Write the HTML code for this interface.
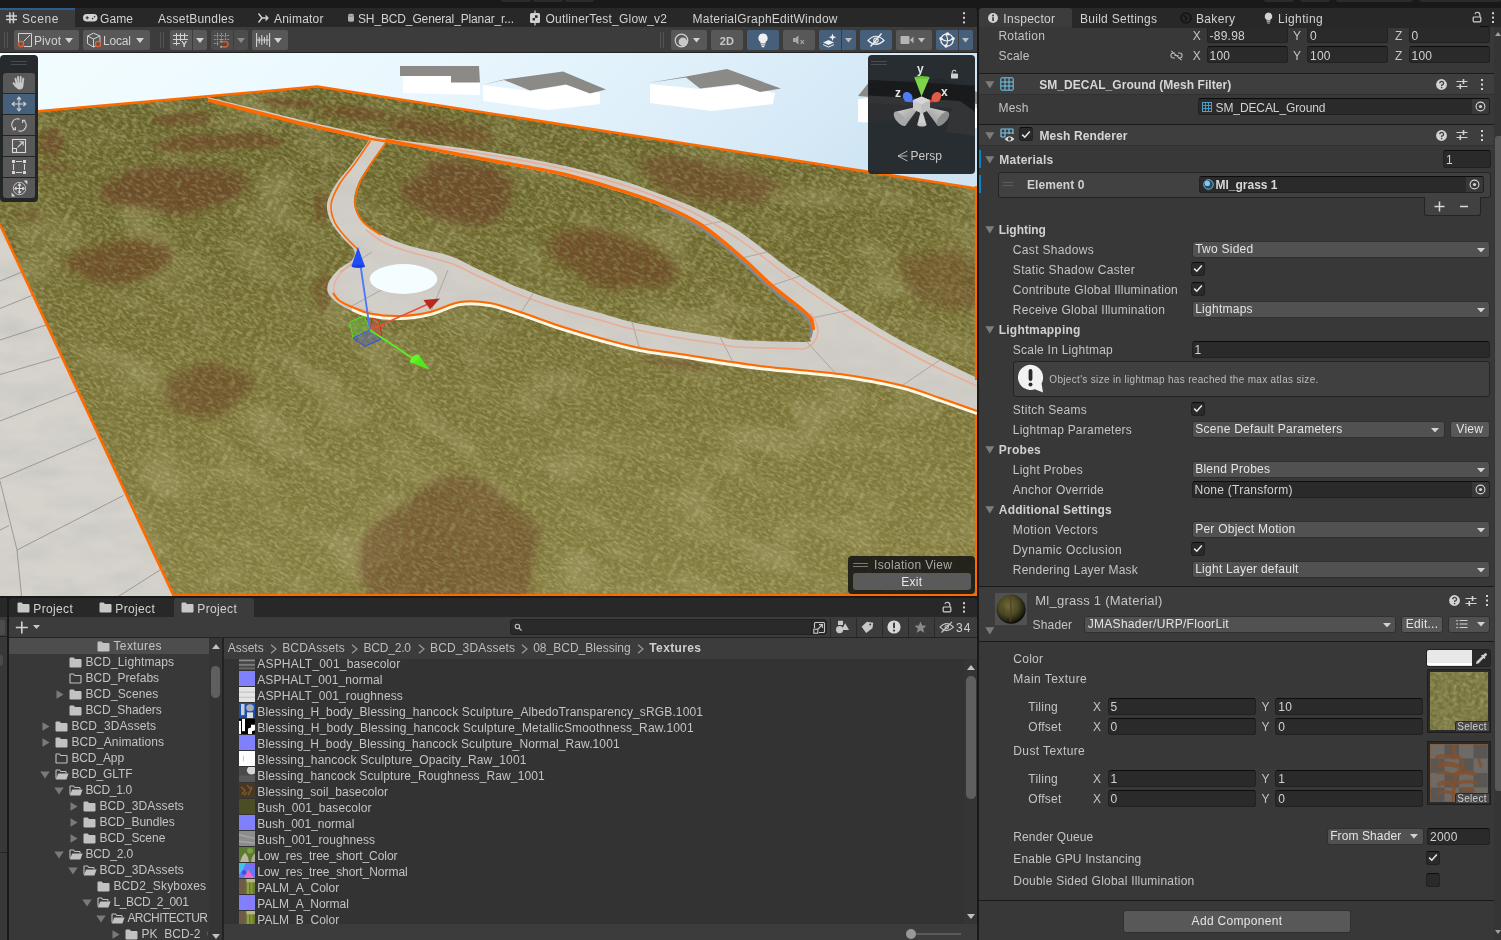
<!DOCTYPE html>
<html><head><meta charset="utf-8"><title>Unity Editor</title>
<style>
html,body{margin:0;padding:0;}
body{width:1501px;height:940px;overflow:hidden;background:#191919;position:relative;font-family:"Liberation Sans",sans-serif;font-size:12px;}
body div,body svg{position:absolute;box-sizing:border-box;}
.t{overflow:visible;}
</style></head><body>
<div id="root" style="left:0;top:0;width:1501px;height:940px;will-change:transform;">
<div style="left:501px;top:0px;width:30px;height:2px;background:#2b2b2b;border-radius:0 0 2px 2px;"></div>
<div style="left:533px;top:0px;width:30px;height:2px;background:#2b2b2b;border-radius:0 0 2px 2px;"></div>
<div style="left:565px;top:0px;width:29px;height:2px;background:#2b2b2b;border-radius:0 0 2px 2px;"></div>
<div style="left:1264px;top:0px;width:30px;height:2px;background:#2b2b2b;border-radius:0 0 2px 2px;"></div>
<div style="left:1300px;top:0px;width:30px;height:2px;background:#2b2b2b;border-radius:0 0 2px 2px;"></div>
<div style="left:1336px;top:0px;width:77px;height:2px;background:#2b2b2b;border-radius:0 0 2px 2px;"></div>
<div style="left:1419px;top:0px;width:82px;height:2px;background:#2b2b2b;border-radius:0 0 2px 2px;"></div>
<div style="left:0px;top:8px;width:977px;height:19px;background:#282828;border-radius:0 3px 0 0;"></div>
<div style="left:0px;top:8px;width:75px;height:20px;background:#3c3c3c;"></div>
<div style="left:0px;top:8px;width:75px;height:2px;background:#2c5d8c;"></div>
<svg style="left:6px;top:12px;" width="11" height="11.5" viewBox="0 0 11 11.5" ><path d="M3.9 0.3v11M7.4 0.3v11M0 4.1h11M0 7.6h11" stroke="#d2d2d2" stroke-width="1.5" fill="none"/></svg>
<div class="t" style="left:22px;top:10.6px;line-height:16px;font-size:12px;color:#d2d2d2;letter-spacing:0.617px;white-space:nowrap;">Scene</div>
<svg style="left:83px;top:13px;" width="15" height="10" viewBox="0 0 15 10" ><rect x="0" y="1" width="14.5" height="7.6" rx="3.8" fill="#d2d2d2"/><path d="M2.6 4.8h3.2M4.2 3.2v3.2" stroke="#282828" stroke-width="1"/><circle cx="9.6" cy="5.6" r="0.8" fill="#282828"/><circle cx="11.6" cy="3.8" r="0.8" fill="#282828"/></svg>
<div class="t" style="left:100px;top:10.6px;line-height:16px;font-size:12px;color:#d2d2d2;letter-spacing:0.104px;white-space:nowrap;">Game</div>
<div class="t" style="left:158px;top:10.6px;line-height:16px;font-size:12px;color:#d2d2d2;letter-spacing:0.237px;white-space:nowrap;">AssetBundles</div>
<svg style="left:257px;top:12px;" width="13" height="12" viewBox="0 0 13 12" ><path d="M1.5 1.5 L5 6 L1.5 10.5 M5 6 H11 M8.5 3.5 L11 6 L8.5 8.5" stroke="#d2d2d2" stroke-width="1.4" fill="none" stroke-linejoin="round"/></svg>
<div class="t" style="left:274px;top:10.6px;line-height:16px;font-size:12px;color:#d2d2d2;letter-spacing:0.21px;white-space:nowrap;">Animator</div>
<svg style="left:347px;top:13px;" width="8" height="10" viewBox="0 0 8 10" ><path d="M1 2.2 Q1 0.8 4 0.8 Q7 0.8 7 2.2 V7.2 Q7 8.8 4 8.8 Q1 8.8 1 7.2Z" fill="#b0b0b0"/><path d="M1 2.6 Q4 4.2 7 2.6" stroke="#707070" stroke-width="0.7" fill="none"/></svg>
<div class="t" style="left:358px;top:10.6px;line-height:16px;font-size:12px;color:#d2d2d2;letter-spacing:-0.137px;white-space:nowrap;">SH_BCD_General_Planar_r...</div>
<svg style="left:529px;top:10px;" width="12" height="16" viewBox="0 0 12 16" ><rect x="1" y="3" width="10" height="10" rx="1.5" fill="#d2d2d2"/><path d="M6 0.5v3M6 13v2.5" stroke="#d2d2d2" stroke-width="1.2"/><rect x="6" y="5.3" width="2.6" height="2.6" fill="#282828"/><rect x="3.6" y="8" width="2.4" height="2.4" fill="#282828"/></svg>
<div class="t" style="left:545.5px;top:10.6px;line-height:16px;font-size:12px;color:#d2d2d2;letter-spacing:0.216px;white-space:nowrap;">OutlinerTest_Glow_v2</div>
<div class="t" style="left:692.5px;top:10.6px;line-height:16px;font-size:12px;color:#d2d2d2;letter-spacing:0.255px;white-space:nowrap;">MaterialGraphEditWindow</div>
<svg style="left:961px;top:11px;" width="6" height="14" viewBox="0 0 6 14" ><rect x="2" y="1.2" width="2" height="2" fill="#d2d2d2"/><rect x="2" y="5.8" width="2" height="2" fill="#d2d2d2"/><rect x="2" y="10.4" width="2" height="2" fill="#d2d2d2"/></svg>
<div style="left:0px;top:27px;width:977px;height:25px;background:#3c3c3c;"></div>
<div style="left:0px;top:52px;width:977px;height:1px;background:#232323;"></div>
<div style="left:4px;top:32px;width:1px;height:16px;background:#555555;"></div>
<div style="left:7px;top:32px;width:1px;height:16px;background:#555555;"></div>
<div style="left:14px;top:30px;width:65px;height:20px;background:#585858;border-radius:2px;"></div>
<svg style="left:17px;top:32px;" width="17" height="17" viewBox="0 0 17 17" ><path d="M1.5 11V1.5H14.5V14.5H7" stroke="#d2d2d2" stroke-width="1" fill="none"/><path d="M6.5 9.5L13 3" stroke="#d2d2d2" stroke-width="1"/><circle cx="4" cy="12" r="2.6" stroke="#f0602a" stroke-width="1.2" fill="none"/></svg>
<div class="t" style="left:34px;top:32.6px;line-height:16px;font-size:12px;color:#d2d2d2;letter-spacing:0.078px;white-space:nowrap;">Pivot</div>
<svg style="left:65px;top:38.0px;" width="8" height="5" viewBox="0 0 8 5" ><path d="M0 0H8L4.0 5Z" fill="#d2d2d2"/></svg>
<div style="left:83px;top:30px;width:67px;height:20px;background:#585858;border-radius:2px;"></div>
<svg style="left:86px;top:32px;" width="17" height="17" viewBox="0 0 17 17" ><path d="M7.5 1.2L14 4V11.5L7.5 15L1.5 11.5V4Z M1.5 4L7.5 7L14 4 M7.5 7V15" stroke="#d2d2d2" stroke-width="1" fill="none" stroke-linejoin="round"/><circle cx="12" cy="12" r="2.6" stroke="#f0602a" stroke-width="1.2" fill="#585858"/></svg>
<div class="t" style="left:103px;top:32.6px;line-height:16px;font-size:12px;color:#d2d2d2;letter-spacing:-0.172px;white-space:nowrap;">Local</div>
<svg style="left:136px;top:38.0px;" width="8" height="5" viewBox="0 0 8 5" ><path d="M0 0H8L4.0 5Z" fill="#d2d2d2"/></svg>
<div style="left:160px;top:32px;width:1px;height:16px;background:#555555;"></div>
<div style="left:163px;top:32px;width:1px;height:16px;background:#555555;"></div>
<div style="left:170px;top:30px;width:22px;height:20px;background:#585858;border-radius:2px 0 0 2px;"></div>
<div style="left:193px;top:30px;width:14px;height:20px;background:#585858;border-radius:0 2px 2px 0;"></div>
<svg style="left:173px;top:33px;" width="16" height="15" viewBox="0 0 16 15" ><path d="M3.5 0V12.5M7.5 0V8M11.5 0V6.5M0 2.5H15M0 6.5H15M0 10.5H7" stroke="#d2d2d2" stroke-width="1" fill="none"/></svg>
<div class="t" style="left:181px;top:36.2px;line-height:16px;font-size:9.5px;color:#d8d8d8;letter-spacing:0px;white-space:nowrap;font-weight:700;">Y</div>
<svg style="left:196px;top:38.0px;" width="8" height="5" viewBox="0 0 8 5" ><path d="M0 0H8L4.0 5Z" fill="#d2d2d2"/></svg>
<div style="left:211px;top:30px;width:22px;height:20px;background:#4c4c4c;border-radius:2px 0 0 2px;"></div>
<div style="left:234px;top:30px;width:14px;height:20px;background:#4c4c4c;border-radius:0 2px 2px 0;"></div>
<svg style="left:214px;top:33px;" width="16" height="15" viewBox="0 0 16 15" ><path d="M3.5 0V12.5M7.5 0V7M11.5 0V6M0 2.5H15M0 6.5H15M0 10.5H5" stroke="#9a9a9a" stroke-width="1" stroke-dasharray="1.6 1.1" fill="none"/><path d="M8.2 8.6H11.4A2.6 2.6 0 0 1 11.4 13.8H8.2" stroke="#cc5a2e" stroke-width="1.7" fill="none"/><rect x="6.2" y="7.7" width="2" height="1.9" fill="#a8a8a8"/><rect x="6.2" y="12.8" width="2" height="1.9" fill="#a8a8a8"/></svg>
<svg style="left:237px;top:38.0px;" width="8" height="5" viewBox="0 0 8 5" ><path d="M0 0H8L4.0 5Z" fill="#8a8a8a"/></svg>
<div style="left:252px;top:30px;width:36px;height:20px;background:#585858;border-radius:2px;"></div>
<svg style="left:256px;top:33px;" width="15" height="14" viewBox="0 0 15 14" ><path d="M0.6 0V14M13.6 0V14M3.2 4V10.5M5.8 2V12M8.4 4V10.5M11 2V12M0.6 7H13.6" stroke="#d2d2d2" stroke-width="1.1" fill="none"/></svg>
<svg style="left:274px;top:38.0px;" width="8" height="5" viewBox="0 0 8 5" ><path d="M0 0H8L4.0 5Z" fill="#d2d2d2"/></svg>
<div style="left:660px;top:32px;width:1px;height:16px;background:#555555;"></div>
<div style="left:663px;top:32px;width:1px;height:16px;background:#555555;"></div>
<div style="left:671px;top:30px;width:36px;height:20px;background:#585858;border-radius:2px;"></div>
<svg style="left:674px;top:33px;" width="15" height="15" viewBox="0 0 15 15" ><circle cx="7.5" cy="7.5" r="6.3" stroke="#d2d2d2" stroke-width="1.2" fill="none"/><circle cx="8.9" cy="8.7" r="4.3" fill="#c8c8c8"/></svg>
<svg style="left:693px;top:38.25px;" width="7" height="4.5" viewBox="0 0 7 4.5" ><path d="M0 0H7L3.5 4.5Z" fill="#d2d2d2"/></svg>
<div style="left:711px;top:30px;width:32px;height:20px;background:#585858;border-radius:2px;"></div>
<div class="t" style="left:711px;top:33.1px;line-height:16px;font-size:11px;color:#d2d2d2;letter-spacing:0.25px;white-space:nowrap;width:32px;text-align:center;font-weight:700;color:#c8c8c8;">2D</div>
<div style="left:747px;top:30px;width:32px;height:20px;background:#46607c;border-radius:2px;"></div>
<svg style="left:757px;top:33px;" width="12" height="15" viewBox="0 0 12 15" ><path d="M6 0.6A4.6 4.6 0 0 1 8.6 9V10.4H3.4V9A4.6 4.6 0 0 1 6 0.6Z" fill="#f0f0f0"/><rect x="3.8" y="11.2" width="4.4" height="1.4" rx="0.7" fill="#f0f0f0"/><rect x="4.6" y="13.1" width="2.8" height="1.1" rx="0.5" fill="#f0f0f0"/></svg>
<div style="left:783px;top:30px;width:32px;height:20px;background:#585858;border-radius:2px;"></div>
<svg style="left:792px;top:34px;" width="16" height="13" viewBox="0 0 16 13" ><path d="M1 4H3.5L6.5 1.5V10.5L3.5 8H1Z" fill="#a8a8a8"/><path d="M8.5 6L12 9.8M12 6L8.5 9.8" stroke="#a8a8a8" stroke-width="1.1"/></svg>
<div style="left:819px;top:30px;width:22px;height:20px;background:#46607c;border-radius:2px 0 0 2px;"></div>
<div style="left:842px;top:30px;width:14px;height:20px;background:#46607c;border-radius:0 2px 2px 0;"></div>
<svg style="left:822px;top:33px;" width="16" height="15" viewBox="0 0 16 15" ><path d="M1 9.5L6.5 7L12 9.5L6.5 12Z" fill="#f0f0f0"/><path d="M1 11.6L6.5 14L12 11.6" stroke="#f0f0f0" stroke-width="1" fill="none"/><path d="M10.5 0.5L11.5 3.2L14.2 4.2L11.5 5.2L10.5 7.9L9.5 5.2L6.8 4.2L9.5 3.2Z" fill="#f0f0f0"/></svg>
<svg style="left:845px;top:38.25px;" width="7" height="4.5" viewBox="0 0 7 4.5" ><path d="M0 0H7L3.5 4.5Z" fill="#c0c0c0"/></svg>
<div style="left:860px;top:30px;width:32px;height:20px;background:#46607c;border-radius:2px;"></div>
<svg style="left:867px;top:33px;" width="18" height="14" viewBox="0 0 18 14" ><path d="M1 7.5Q9 -1 17 7.5Q9 15 1 7.5Z" stroke="#f0f0f0" stroke-width="1.2" fill="none"/><circle cx="9" cy="7.2" r="2.2" fill="none" stroke="#f0f0f0" stroke-width="1.1"/><path d="M3.5 13.5L14.5 0.5" stroke="#f0f0f0" stroke-width="1.3"/></svg>
<div style="left:896px;top:30px;width:36px;height:20px;background:#585858;border-radius:2px;"></div>
<svg style="left:900px;top:35px;" width="15" height="10" viewBox="0 0 15 10" ><rect x="0.5" y="1" width="9" height="8" rx="1" fill="#b4b4b4"/><path d="M10 5L13.5 1.5V8.5Z" fill="#b4b4b4"/></svg>
<svg style="left:918px;top:38.25px;" width="7" height="4.5" viewBox="0 0 7 4.5" ><path d="M0 0H7L3.5 4.5Z" fill="#c0c0c0"/></svg>
<div style="left:936px;top:30px;width:22px;height:20px;background:#46607c;border-radius:2px 0 0 2px;"></div>
<div style="left:959px;top:30px;width:14px;height:20px;background:#46607c;border-radius:0 2px 2px 0;"></div>
<svg style="left:939px;top:32px;" width="16" height="16" viewBox="0 0 16 16" ><circle cx="8" cy="8" r="6.2" stroke="#f0f0f0" stroke-width="1.3" fill="none"/><path d="M2 6.5Q8 11.5 14 6.5M6.5 2Q10.5 8 7 14" stroke="#f0f0f0" stroke-width="1.1" fill="none"/><circle cx="8.6" cy="1.9" r="1.7" fill="#f0f0f0"/><circle cx="1.9" cy="6.6" r="1.7" fill="#f0f0f0"/><circle cx="14.1" cy="6.6" r="1.7" fill="#f0f0f0"/><circle cx="7" cy="14" r="1.7" fill="#f0f0f0"/></svg>
<svg style="left:962px;top:38.25px;" width="7" height="4.5" viewBox="0 0 7 4.5" ><path d="M0 0H7L3.5 4.5Z" fill="#c0c0c0"/></svg>
<svg style="left:0px;top:53px;" width="977" height="543" viewBox="0 53 977 543" ><defs>
<linearGradient id="sky" x1="0" y1="0" x2="1" y2="0.25"><stop offset="0" stop-color="#f3fdff"/><stop offset="0.4" stop-color="#eaf8fe"/><stop offset="0.7" stop-color="#deeffa"/><stop offset="1" stop-color="#cee4f3"/></linearGradient>
<linearGradient id="grs" x1="0" y1="86" x2="0" y2="596" gradientUnits="userSpaceOnUse"><stop offset="0" stop-color="#65602a"/><stop offset="0.3" stop-color="#6d672e"/><stop offset="0.6" stop-color="#797136"/><stop offset="1" stop-color="#857c40"/></linearGradient>
<filter id="b6" x="-10%" y="-10%" width="120%" height="120%"><feGaussianBlur stdDeviation="4.5"/></filter>
<filter id="b2" x="-10%" y="-10%" width="120%" height="120%"><feGaussianBlur stdDeviation="2.2"/></filter><filter id="b1"><feGaussianBlur stdDeviation="0.6"/></filter>
<filter id="gnoise" x="0" y="0" width="100%" height="100%"><feTurbulence type="fractalNoise" baseFrequency="0.2 0.42" numOctaves="3" seed="3" result="n"/><feColorMatrix in="n" type="matrix" values="0 0 0 0 0.69  0 0 0 0 0.64  0 0 0 0 0.37  2.6 2.6 0 0 -2.4"/></filter>
<filter id="gnoise2" x="0" y="0" width="100%" height="100%"><feTurbulence type="fractalNoise" baseFrequency="0.18 0.4" numOctaves="3" seed="11" result="n"/><feColorMatrix in="n" type="matrix" values="0 0 0 0 0.3  0 0 0 0 0.32  0 0 0 0 0.1  2.6 0 2.6 0 -2.4"/></filter>
<filter id="gmot" x="0" y="0" width="100%" height="100%"><feTurbulence type="fractalNoise" baseFrequency="0.014 0.03" numOctaves="2" seed="21" result="n"/><feColorMatrix in="n" type="matrix" values="0 0 0 0 0.6  0 0 0 0 0.57  0 0 0 0 0.32  2.6 0 2.6 0 -2.5"/></filter>
<filter id="cnoise" x="0" y="0" width="100%" height="100%"><feTurbulence type="fractalNoise" baseFrequency="0.02 0.05" numOctaves="3" seed="5"/><feColorMatrix type="matrix" values="0 0 0 0 0.5  0 0 0 0 0.5  0 0 0 0 0.48  1.2 1.2 0 0 -1.0"/></filter>
<clipPath id="cg"><polygon points="0,114.4 38,111 317,86.5 977,188.5 977,596 173.5,596 0,225"/></clipPath>
<clipPath id="cc"><path d="M206 96.6C221.7 100.5 272.7 113.4 300 119.8C327.3 126.2 355.7 132.1 370 135.2C384.3 138.3 367.7 136.0 386 138.6C404.3 141.2 451.0 146.2 480 150.6C509.0 155.0 536.7 160.1 560 165C583.3 169.9 603.3 175.2 620 180C636.7 184.8 646.7 189.0 660 194C673.3 199.0 686.7 203.7 700 210C713.3 216.3 726.7 223.3 740 232C753.3 240.7 770.0 254.7 780 262C790.0 269.3 788.3 268.0 800 276C811.7 284.0 833.3 299.3 850 310C866.7 320.7 885.0 331.7 900 340C915.0 348.3 927.2 353.7 940 360C952.8 366.3 970.8 375.0 977 378 L977 413C970.8 410.8 952.8 404.3 940 400C927.2 395.7 916.7 391.0 900 387C883.3 383.0 863.3 379.2 840 376C816.7 372.8 786.7 371.3 760 368C733.3 364.7 700.0 359.0 680 356C660.0 353.0 653.3 352.7 640 350C626.7 347.3 613.3 343.7 600 340C586.7 336.3 573.3 332.3 560 328C546.7 323.7 531.7 317.8 520 314C508.3 310.2 500.0 306.7 490 305C480.0 303.3 470.0 302.5 460 304C450.0 305.5 440.0 311.7 430 314C420.0 316.3 410.0 317.7 400 318C390.0 318.3 379.0 317.7 370 316C361.0 314.3 352.7 311.3 346 308C339.3 304.7 333.0 300.0 330 296C327.0 292.0 326.7 288.3 328 284C329.3 279.7 334.0 274.0 338 270C342.0 266.0 349.3 263.3 352 260C354.7 256.7 355.7 253.8 354 250C352.3 246.2 345.8 241.7 342 237C338.2 232.3 333.5 227.5 331 222C328.5 216.5 326.2 210.3 327 204C327.8 197.7 331.8 190.7 336 184C340.2 177.3 346.5 171.2 352 164C357.5 156.8 366.2 144.4 369 140.5 L300 124.5 L211 101.5 Z M386 142 L480 160C493.3 162.5 536.7 169.7 560 175C583.3 180.3 603.3 186.8 620 192C636.7 197.2 646.7 200.3 660 206C673.3 211.7 686.7 217.3 700 226C713.3 234.7 728.3 248.0 740 258C751.7 268.0 760.0 277.3 770 286C780.0 294.7 793.3 304.3 800 310C806.7 315.7 807.9 316.7 810 320C812.1 323.3 812.5 327.0 812.5 330C812.5 333.0 811.4 336.0 810 338C808.6 340.0 815.7 341.7 804 342C792.3 342.3 754.0 340.8 740 340C726.0 339.2 730.0 338.5 720 337C710.0 335.5 694.7 333.5 680 331C665.3 328.5 645.3 325.0 632 322C618.7 319.0 612.0 316.3 600 313C588.0 309.7 573.3 306.2 560 302C546.7 297.8 533.3 293.3 520 288C506.7 282.7 491.7 275.3 480 270C468.3 264.7 461.7 260.0 450 256C438.3 252.0 421.7 249.7 410 246C398.3 242.3 388.0 238.2 380 234C372.0 229.8 366.3 226.0 362 221C357.7 216.0 354.7 210.2 354 204C353.3 197.8 355.3 190.7 358 184C360.7 177.3 368.0 167.3 370 164 L385 143 Z" clip-rule="evenodd"/></clipPath>
<clipPath id="cl"><polygon points="0,225 173.5,596 0,596"/></clipPath>
</defs><rect x="0" y="53" width="977" height="200" fill="url(#sky)"/><polygon points="403,76 480,76 480,95 403,93" fill="#ffffff"/><polygon points="400,66 479,66 480,82.5 451,82.5 451,76 400,76" fill="#8b8a86"/><polygon points="483,85 530,91 566,85 600,93 600,104 548,110 483,101" fill="#ffffff"/><polygon points="480,85.5 504,79.5 563,71.5 606,89.5 590,93.5 566,84.5 530,90.5 504,80" fill="#8b8a86"/><polygon points="650,84 700,89 738,85 775,93 773,104 712,111 650,103" fill="#ffffff"/><polygon points="648,83 686,76.5 727,69 781,88.5 760,92 738,84 700,88.5 686,77.5" fill="#8b8a86"/><polygon points="858,99 900,96 977,108 977,128 858,122" fill="#ffffff"/><polygon points="858,96 868,83.5 940,78 977,92 977,104 900,92 870,97" fill="#8b8a86"/><polygon points="0,114.4 38,111 317,86.5 977,188.5 977,596 173.5,596 0,225" fill="url(#grs)"/><g clip-path="url(#cg)"><g transform="rotate(24 488 340)"><rect x="-200" y="-260" width="1400" height="1200" filter="url(#gmot)" opacity="0.24"/></g><g transform="rotate(27 488 340)"><rect x="-200" y="-260" width="1400" height="1200" filter="url(#gnoise)" opacity="0.36"/></g><g filter="url(#b6)"><path d="M248.0 187.0C247.6 190.6 243.5 194.4 238.2 197.7C232.9 201.0 226.0 204.1 216.3 206.9C206.6 209.7 191.8 214.7 180.0 214.5C168.2 214.3 157.1 208.4 145.5 205.9C133.9 203.4 118.5 202.8 110.6 199.7C102.7 196.5 97.4 191.1 98.2 187.0C99.0 182.9 108.6 178.8 115.6 175.2C122.6 171.6 129.7 166.7 140.4 165.2C151.1 163.7 167.9 165.6 180.0 166.2C192.1 166.8 202.7 167.4 212.8 169.0C222.9 170.6 234.5 172.9 240.4 175.9C246.3 178.9 248.4 183.4 248.0 187.0Z" transform="rotate(-3 180 187)" fill="#6e4c2a" opacity="0.95"/><path d="M171.6 262.0C170.5 265.8 165.6 269.7 160.7 272.6C155.8 275.6 149.0 277.7 142.1 279.7C135.2 281.7 126.9 284.4 119.0 284.5C111.1 284.6 101.3 282.7 94.7 280.6C88.1 278.5 84.3 275.2 79.3 272.1C74.2 269.0 65.4 265.6 64.4 262.0C63.4 258.4 67.8 253.2 73.2 250.3C78.6 247.4 89.0 246.6 96.6 244.8C104.2 243.0 111.1 239.9 119.0 239.6C126.9 239.3 135.8 241.2 143.9 242.9C152.0 244.6 162.9 246.4 167.5 249.6C172.1 252.8 172.7 258.2 171.6 262.0Z" transform="rotate(-4 119 262)" fill="#6e4c2a" opacity="0.90"/><path d="M492.1 129.5C493.5 131.3 497.7 133.7 494.2 135.4C490.7 137.2 480.6 139.5 471.2 140.0C461.8 140.5 447.7 139.0 438.0 138.6C428.3 138.2 420.2 138.2 412.8 137.5C405.4 136.8 397.8 135.5 393.4 134.2C389.0 132.9 387.1 131.2 386.4 129.5C385.6 127.8 385.2 125.8 388.9 124.3C392.6 122.8 400.4 120.9 408.6 120.2C416.8 119.5 429.2 119.6 438.0 119.9C446.8 120.2 453.4 121.3 461.4 122.1C469.4 122.8 480.8 123.2 485.9 124.4C491.0 125.6 490.7 127.7 492.1 129.5Z" transform="rotate(7 438 129.5)" fill="#6e4c2a" opacity="0.90"/><path d="M509.6 192.0C509.0 197.1 509.4 201.8 506.0 206.6C502.6 211.4 497.5 218.1 489.5 220.7C481.5 223.3 467.8 223.1 458.0 222.4C448.2 221.8 438.9 219.4 430.8 216.8C422.7 214.2 414.2 210.9 409.1 206.8C404.0 202.7 398.8 196.5 400.4 192.0C402.0 187.5 414.2 184.7 418.6 180.0C423.1 175.3 420.5 167.0 427.1 163.8C433.7 160.6 447.7 160.6 458.0 160.6C468.3 160.6 480.1 161.4 488.7 164.0C497.3 166.6 506.4 171.5 509.9 176.2C513.4 180.9 510.2 186.9 509.6 192.0Z" transform="rotate(6 458 192)" fill="#6e4c2a" opacity="0.95"/><path d="M679.4 258.0C680.3 262.7 676.7 268.9 670.3 272.7C663.9 276.5 651.0 277.7 641.0 280.6C631.0 283.5 620.2 290.0 610.0 289.9C599.8 289.8 588.4 283.4 579.6 280.2C570.8 277.0 562.9 274.5 557.2 270.8C551.5 267.1 545.7 262.4 545.3 258.0C544.9 253.6 549.9 248.7 555.0 244.6C560.1 240.5 566.8 235.2 576.0 233.2C585.2 231.2 599.4 232.0 610.0 232.5C620.6 233.0 630.5 234.4 639.6 236.4C648.7 238.4 658.1 241.1 664.7 244.7C671.3 248.3 678.5 253.3 679.4 258.0Z" transform="rotate(12 610 258)" fill="#6e4c2a" opacity="0.90"/><path d="M768.5 180.0C766.1 183.5 771.5 187.1 766.0 189.5C760.5 191.9 746.0 192.1 735.8 194.3C725.6 196.5 716.6 202.0 705.0 202.6C693.4 203.2 675.8 200.3 666.4 198.0C657.0 195.7 653.7 191.7 648.9 188.7C644.1 185.7 638.3 183.0 637.5 180.0C636.7 177.0 638.9 173.3 644.3 170.6C649.7 167.9 659.7 164.9 669.8 163.6C679.9 162.3 692.2 163.2 705.0 162.7C717.8 162.2 734.1 159.7 746.7 160.6C759.3 161.5 776.9 165.1 780.5 168.3C784.1 171.5 770.9 176.5 768.5 180.0Z" transform="rotate(13 705 180)" fill="#6e4c2a" opacity="0.80"/><path d="M985.2 280.0C986.0 285.0 983.7 292.1 979.6 296.1C975.5 300.1 966.9 301.9 960.6 303.8C954.3 305.7 948.5 307.3 942.0 307.7C935.5 308.1 927.2 308.5 921.4 306.4C915.6 304.2 912.0 299.2 907.3 294.8C902.6 290.4 893.0 284.8 893.2 280.0C893.4 275.2 903.6 269.7 908.7 265.8C913.8 261.9 918.4 260.7 923.9 256.8C929.4 252.9 935.3 243.3 942.0 242.5C948.7 241.7 958.6 247.8 964.1 251.7C969.6 255.6 971.6 261.2 975.1 265.9C978.6 270.6 984.5 275.0 985.2 280.0Z" transform="rotate(25 942 280)" fill="#6e4c2a" opacity="0.55"/><path d="M252.3 389.0C250.6 393.0 242.9 395.7 239.1 399.3C235.3 402.9 234.8 407.5 229.5 410.6C224.2 413.7 214.9 417.5 207.0 417.9C199.1 418.3 188.7 415.8 181.8 413.2C174.9 410.6 168.2 406.2 165.6 402.2C163.0 398.2 165.4 393.2 166.2 389.0C167.0 384.8 166.7 380.3 170.2 377.2C173.7 374.1 181.2 372.8 187.3 370.2C193.4 367.6 199.9 362.4 207.0 361.9C214.1 361.4 222.5 365.1 229.6 367.4C236.7 369.6 245.7 371.8 249.5 375.4C253.3 379.0 254.0 385.0 252.3 389.0Z" transform="rotate(0 207 389)" fill="#6e4c2a" opacity="0.70"/><path d="M540.9 550.0C541.8 560.7 532.4 571.5 526.7 583.4C521.0 595.3 518.2 612.4 506.6 621.3C495.0 630.2 473.6 636.8 457.0 637.0C440.4 637.2 421.0 629.9 406.7 622.3C392.4 614.6 379.4 603.1 371.2 591.1C363.0 579.1 357.2 563.5 357.5 550.0C357.8 536.5 363.1 519.5 373.0 509.8C382.9 500.2 402.7 497.8 416.7 492.1C430.7 486.4 443.2 475.9 457.0 475.4C470.8 474.9 488.6 481.8 499.3 489.1C510.0 496.4 514.4 509.1 521.3 519.2C528.2 529.4 540.0 539.3 540.9 550.0Z" transform="rotate(-15 457 550)" fill="#6e4c2a" opacity="0.62"/></g><g filter="url(#b2)"><path d="M215.0 119.0C215.1 120.0 211.2 121.0 208.9 122.1C206.6 123.2 205.3 125.0 201.0 125.5C196.7 126.0 188.9 125.0 183.0 125.0C177.1 125.0 170.4 125.6 165.7 125.2C161.0 124.8 156.7 123.4 154.8 122.4C152.9 121.4 154.4 120.2 154.2 119.0C153.9 117.8 150.9 116.2 153.3 115.4C155.7 114.6 163.8 114.5 168.7 113.9C173.6 113.3 178.2 112.0 183.0 112.0C187.8 112.0 193.3 113.1 197.5 113.8C201.7 114.5 205.4 115.1 208.3 116.0C211.2 116.9 214.9 118.0 215.0 119.0Z" transform="rotate(-4 183 119)" fill="#6e4c2a" opacity="0.80"/><path d="M282.9 142.5C284.7 144.0 288.3 146.4 282.5 147.5C276.7 148.6 258.4 148.8 248.0 149.3C237.6 149.8 230.3 150.4 220.0 150.6C209.7 150.8 197.0 151.2 186.2 150.7C175.4 150.2 160.5 149.1 155.1 147.7C149.7 146.3 151.8 144.1 153.6 142.5C155.4 140.9 161.3 139.7 166.1 138.2C170.9 136.7 173.2 133.9 182.2 133.4C191.2 132.9 207.6 134.9 220.0 134.9C232.4 134.9 247.8 133.1 256.4 133.7C265.0 134.3 267.3 136.8 271.7 138.3C276.1 139.8 281.1 141.0 282.9 142.5Z" transform="rotate(-2 220 142.5)" fill="#6e4c2a" opacity="0.85"/><path d="M65.4 143.0C65.2 145.3 62.7 147.2 61.6 149.6C60.5 152.0 60.6 156.6 58.8 157.5C57.0 158.4 53.4 155.7 51.0 155.3C48.6 154.9 46.6 155.8 44.5 155.0C42.4 154.2 39.2 152.8 38.4 150.8C37.5 148.8 39.2 145.5 39.4 143.0C39.6 140.5 38.5 137.6 39.5 135.9C40.5 134.2 43.5 134.0 45.4 132.7C47.3 131.4 48.9 128.4 51.0 127.9C53.1 127.4 56.3 128.2 58.3 129.5C60.3 130.8 61.6 133.4 62.8 135.7C64.0 137.9 65.6 140.7 65.4 143.0Z" transform="rotate(0 51 143)" fill="#6e4c2a" opacity="0.80"/><path d="M71.2 167.5C70.9 168.2 67.8 168.8 66.3 169.5C64.8 170.2 64.2 171.1 62.1 171.5C60.1 171.9 56.6 171.9 54.0 171.9C51.4 171.9 48.4 171.7 46.2 171.3C44.0 170.9 42.5 170.2 41.0 169.6C39.5 169.0 37.4 168.3 37.0 167.5C36.6 166.7 37.1 165.6 38.7 165.0C40.3 164.4 44.0 164.1 46.5 163.8C49.0 163.5 51.7 162.9 54.0 163.0C56.3 163.1 58.0 164.0 60.4 164.4C62.8 164.8 66.3 164.7 68.1 165.2C69.9 165.7 71.5 166.8 71.2 167.5Z" transform="rotate(0 54 167.5)" fill="#6e4c2a" opacity="0.70"/><path d="M317.0 102.0C317.3 102.8 318.4 103.8 316.0 104.5C313.6 105.2 307.7 105.9 302.9 106.1C298.1 106.3 291.9 106.0 287.0 105.9C282.1 105.8 277.7 105.9 273.3 105.6C268.9 105.3 262.5 104.9 260.8 104.3C259.1 103.7 263.1 102.7 263.4 102.0C263.7 101.3 260.9 100.5 262.7 99.9C264.5 99.4 270.3 99.0 274.4 98.7C278.4 98.4 282.9 98.3 287.0 98.3C291.1 98.3 294.5 98.7 299.0 98.9C303.5 99.1 311.1 99.2 314.1 99.7C317.1 100.2 316.7 101.2 317.0 102.0Z" transform="rotate(3 287 102)" fill="#6e4c2a" opacity="0.90"/><path d="M386.5 113.5C386.2 114.5 386.0 115.5 383.7 116.3C381.4 117.1 377.5 117.9 372.9 118.6C368.3 119.3 361.3 120.6 356.0 120.5C350.7 120.4 346.1 118.7 341.1 118.0C336.1 117.3 329.6 117.2 326.1 116.5C322.6 115.8 321.0 114.6 320.2 113.5C319.4 112.4 318.7 111.0 321.4 110.0C324.1 109.0 330.6 108.1 336.4 107.5C342.2 106.9 350.0 106.3 356.0 106.5C362.0 106.7 367.3 107.9 372.2 108.6C377.1 109.3 383.1 109.7 385.5 110.5C387.9 111.3 386.8 112.5 386.5 113.5Z" transform="rotate(5 356 113.5)" fill="#6e4c2a" opacity="0.90"/><path d="M329.3 208.0C329.3 210.6 329.6 213.7 329.1 215.9C328.6 218.2 327.5 219.8 326.5 221.5C325.5 223.2 324.3 225.7 323.0 226.3C321.7 226.9 319.7 226.8 318.6 225.2C317.5 223.5 317.2 219.3 316.5 216.4C315.8 213.5 314.4 211.1 314.2 208.0C314.0 204.9 314.6 200.9 315.3 198.0C316.0 195.1 317.3 191.9 318.6 190.8C319.9 189.8 321.7 191.0 323.0 191.7C324.3 192.3 325.4 193.3 326.4 194.7C327.4 196.1 328.4 198.1 328.9 200.3C329.4 202.5 329.3 205.4 329.3 208.0Z" transform="rotate(0 323 208)" fill="#6e4c2a" opacity="0.60"/><path d="M331.5 292.0C331.2 295.0 331.0 297.4 330.4 300.1C329.8 302.8 329.2 306.2 328.0 308.3C326.8 310.4 324.7 312.4 323.0 312.6C321.3 312.8 319.1 311.4 317.7 309.5C316.3 307.6 315.6 303.9 314.8 301.0C314.0 298.1 313.1 295.2 313.0 292.0C312.9 288.8 312.9 284.2 313.9 282.0C314.9 279.8 317.5 280.2 319.0 278.7C320.5 277.2 321.4 273.7 323.0 272.9C324.6 272.1 326.9 272.6 328.4 274.1C329.9 275.6 331.6 279.1 332.1 282.1C332.6 285.1 331.8 289.0 331.5 292.0Z" transform="rotate(0 323 292)" fill="#6e4c2a" opacity="0.55"/><path d="M717.3 364.0C717.8 364.9 713.1 366.1 709.4 366.8C705.7 367.5 700.0 367.8 695.1 368.4C690.2 369.0 685.2 370.3 680.0 370.3C674.8 370.3 669.4 369.1 663.9 368.6C658.4 368.1 651.2 368.0 647.2 367.2C643.2 366.4 639.3 365.0 640.0 364.0C640.7 363.0 647.6 362.1 651.5 361.3C655.4 360.5 658.8 359.9 663.5 359.2C668.2 358.5 674.2 357.5 680.0 357.4C685.8 357.3 694.1 358.0 698.5 358.7C702.9 359.4 703.0 360.6 706.1 361.5C709.2 362.4 716.8 363.1 717.3 364.0Z" transform="rotate(8 680 364)" fill="#6e4c2a" opacity="0.50"/><path d="M44.8 215.0C44.9 216.1 43.8 217.1 43.0 218.3C42.2 219.6 42.0 221.7 39.8 222.5C37.6 223.3 32.9 223.7 30.0 223.4C27.1 223.1 25.2 221.4 22.5 220.7C19.8 220.0 15.6 220.1 13.5 219.2C11.4 218.2 9.8 216.4 10.0 215.0C10.2 213.6 12.4 212.0 14.4 211.0C16.4 210.0 19.3 209.4 21.9 208.8C24.5 208.2 27.4 207.2 30.0 207.3C32.6 207.4 35.4 208.5 37.4 209.3C39.4 210.1 41.0 211.0 42.2 211.9C43.4 212.8 44.7 213.9 44.8 215.0Z" transform="rotate(0 30 215)" fill="#6e4c2a" opacity="0.35"/></g><g transform="rotate(27 488 340)"><rect x="-200" y="-260" width="1400" height="1200" filter="url(#gnoise2)" opacity="0.5"/></g></g><polygon points="0,225 173.5,596 0,596" fill="#d6d3cd"/><g clip-path="url(#cl)"><rect x="0" y="220" width="180" height="380" filter="url(#cnoise)" opacity="0.5"/><path d="M0 281L22 272 M0 308.5L32 295.5 M0 340L46 325 M0 374.5L60 357 M0 421L77 391 M0 479L96 438 M0 530L9 525.5 M17 550L123.5 495.5 M119 596L160 570 M0 481L17 550 L21.5 596" stroke="#8e8c88" stroke-width="0.8" fill="none"/></g><path d="M206 96.6C221.7 100.5 272.7 113.4 300 119.8C327.3 126.2 355.7 132.1 370 135.2C384.3 138.3 367.7 136.0 386 138.6C404.3 141.2 451.0 146.2 480 150.6C509.0 155.0 536.7 160.1 560 165C583.3 169.9 603.3 175.2 620 180C636.7 184.8 646.7 189.0 660 194C673.3 199.0 686.7 203.7 700 210C713.3 216.3 726.7 223.3 740 232C753.3 240.7 770.0 254.7 780 262C790.0 269.3 788.3 268.0 800 276C811.7 284.0 833.3 299.3 850 310C866.7 320.7 885.0 331.7 900 340C915.0 348.3 927.2 353.7 940 360C952.8 366.3 970.8 375.0 977 378 L977 413C970.8 410.8 952.8 404.3 940 400C927.2 395.7 916.7 391.0 900 387C883.3 383.0 863.3 379.2 840 376C816.7 372.8 786.7 371.3 760 368C733.3 364.7 700.0 359.0 680 356C660.0 353.0 653.3 352.7 640 350C626.7 347.3 613.3 343.7 600 340C586.7 336.3 573.3 332.3 560 328C546.7 323.7 531.7 317.8 520 314C508.3 310.2 500.0 306.7 490 305C480.0 303.3 470.0 302.5 460 304C450.0 305.5 440.0 311.7 430 314C420.0 316.3 410.0 317.7 400 318C390.0 318.3 379.0 317.7 370 316C361.0 314.3 352.7 311.3 346 308C339.3 304.7 333.0 300.0 330 296C327.0 292.0 326.7 288.3 328 284C329.3 279.7 334.0 274.0 338 270C342.0 266.0 349.3 263.3 352 260C354.7 256.7 355.7 253.8 354 250C352.3 246.2 345.8 241.7 342 237C338.2 232.3 333.5 227.5 331 222C328.5 216.5 326.2 210.3 327 204C327.8 197.7 331.8 190.7 336 184C340.2 177.3 346.5 171.2 352 164C357.5 156.8 366.2 144.4 369 140.5 L300 124.5 L211 101.5 Z M386 142 L480 160C493.3 162.5 536.7 169.7 560 175C583.3 180.3 603.3 186.8 620 192C636.7 197.2 646.7 200.3 660 206C673.3 211.7 686.7 217.3 700 226C713.3 234.7 728.3 248.0 740 258C751.7 268.0 760.0 277.3 770 286C780.0 294.7 793.3 304.3 800 310C806.7 315.7 807.9 316.7 810 320C812.1 323.3 812.5 327.0 812.5 330C812.5 333.0 811.4 336.0 810 338C808.6 340.0 815.7 341.7 804 342C792.3 342.3 754.0 340.8 740 340C726.0 339.2 730.0 338.5 720 337C710.0 335.5 694.7 333.5 680 331C665.3 328.5 645.3 325.0 632 322C618.7 319.0 612.0 316.3 600 313C588.0 309.7 573.3 306.2 560 302C546.7 297.8 533.3 293.3 520 288C506.7 282.7 491.7 275.3 480 270C468.3 264.7 461.7 260.0 450 256C438.3 252.0 421.7 249.7 410 246C398.3 242.3 388.0 238.2 380 234C372.0 229.8 366.3 226.0 362 221C357.7 216.0 354.7 210.2 354 204C353.3 197.8 355.3 190.7 358 184C360.7 177.3 368.0 167.3 370 164 L385 143 Z" fill="#d2cec8" fill-rule="evenodd"/><g clip-path="url(#cc)"><rect x="200" y="90" width="780" height="330" filter="url(#cnoise)" opacity="0.3"/><path d="M340 272L372 252 M352 306L385 288 M430 314L448 270 M520 314L534 292 M632 322L640 350 M720 337L734 364 M806 341L838 376 M800 276L770 286 M850 310L812 318 M940 360L900 387 M742 258L776 250 M700 226L728 220" stroke="#9a9894" stroke-width="0.7" fill="none"/></g><path d="M660 206C666.7 209.3 686.7 217.3 700 226C713.3 234.7 728.3 248.0 740 258C751.7 268.0 760.0 277.3 770 286C780.0 294.7 793.3 304.3 800 310C806.7 315.7 807.9 316.7 810 320C812.1 323.3 812.3 327.2 812.5 330C812.7 332.8 811.2 335.8 811 337" stroke="#84888e" stroke-width="2.4" fill="none" transform="translate(-0.9,1.0)"/><path d="M386 140.5C401.7 142.7 451.0 148.9 480 153.5C509.0 158.1 536.7 162.9 560 168C583.3 173.1 603.3 179.0 620 184C636.7 189.0 646.7 192.7 660 198C673.3 203.3 686.7 209.0 700 216C713.3 223.0 726.7 231.0 740 240C753.3 249.0 770.0 262.5 780 270C790.0 277.5 788.3 277.0 800 285C811.7 293.0 833.3 307.5 850 318C866.7 328.5 885.0 339.5 900 348C915.0 356.5 927.2 362.7 940 369C952.8 375.3 970.8 383.2 977 386" stroke="#f2a288" stroke-width="1.5" fill="none" opacity="0.8"/><path d="M804 349C793.3 348.7 754.0 347.8 740 347C726.0 346.2 730.0 345.5 720 344C710.0 342.5 694.7 340.5 680 338C665.3 335.5 645.3 332.0 632 329C618.7 326.0 612.0 323.3 600 320C588.0 316.7 573.3 313.2 560 309C546.7 304.8 533.3 300.3 520 295C506.7 289.7 491.7 282.3 480 277C468.3 271.7 461.7 267.2 450 263C438.3 258.8 420.8 255.3 410 252C399.2 248.7 392.3 246.7 385 243C377.7 239.3 369.2 232.2 366 230" stroke="#f2a288" stroke-width="1.5" fill="none" opacity="0.75"/><path d="M804 349Q816 345 818 332Q818 322 810 313" stroke="#f2a288" stroke-width="1.5" fill="none" opacity="0.75"/><path d="M352 263C350.0 264.8 343.0 270.2 340 274C337.0 277.8 334.5 282.2 334 286C333.5 289.8 334.3 293.7 337 297C339.7 300.3 344.2 303.5 350 306C355.8 308.5 368.3 311.0 372 312" stroke="#f2a288" stroke-width="1.4" fill="none" opacity="0.7"/><path d="M0 114.6L38 111.2L317 86.6L977 188.6" stroke="#ff6a00" stroke-width="2.5" fill="none" stroke-linejoin="round"/><path d="M0 224.5L173.8 596" stroke="#ff6a00" stroke-width="2.6" fill="none"/><path d="M172 595H977 M976 186V380 M976 412V596" stroke="#ff6a00" stroke-width="2.2" fill="none"/><path d="M208 100L300 123.2L369 138.8" stroke="#ff6a00" stroke-width="3.6" fill="none"/><path d="M386 142C401.7 145.0 451.0 154.5 480 160C509.0 165.5 536.7 169.7 560 175C583.3 180.3 603.3 186.8 620 192C636.7 197.2 646.7 200.3 660 206C673.3 211.7 686.7 217.3 700 226C713.3 234.7 728.3 248.0 740 258C751.7 268.0 760.0 277.3 770 286C780.0 294.7 793.3 304.3 800 310C806.7 315.7 807.9 316.7 810 320C812.1 323.3 812.1 328.3 812.5 330" stroke="#ff6a00" stroke-width="3.4" fill="none" stroke-linecap="round" transform="translate(0.8,-1.5)"/><path d="M369 138.6L387 141.5" stroke="#ff6a00" stroke-width="2.4" fill="none"/><path d="M369 140.5C366.3 144.4 358.2 156.8 353 164C347.8 171.2 341.9 177.3 338 184C334.1 190.7 330.3 197.7 329.5 204C328.7 210.3 330.6 216.5 333 222C335.4 227.5 340.2 232.5 344 237C347.8 241.5 354.0 247.0 356 249" stroke="#ff6a00" stroke-width="1.6" fill="none" transform="translate(1.6,0)"/><path d="M386 143C383.5 146.5 375.4 157.2 371 164C366.6 170.8 362.1 177.3 359.5 184C356.9 190.7 354.9 197.8 355.5 204C356.1 210.2 358.8 215.9 363 221C367.2 226.1 378.0 232.2 381 234.5" stroke="#ff6a00" stroke-width="1.8" fill="none" transform="translate(-0.4,0.4)"/><path d="M352 307C355.0 308.1 362.0 312.0 370 313.5C378.0 315.0 390.0 316.2 400 316C410.0 315.8 420.0 314.3 430 312C440.0 309.7 450.0 303.5 460 302C470.0 300.5 480.0 301.3 490 303C500.0 304.7 508.3 308.2 520 312C531.7 315.8 546.7 321.7 560 326C573.3 330.3 586.7 334.3 600 338C613.3 341.7 626.7 345.3 640 348C653.3 350.7 660.0 351.0 680 354C700.0 357.0 733.3 362.7 760 366C786.7 369.3 816.7 370.8 840 374C863.3 377.2 883.3 381.0 900 385C916.7 389.0 927.2 393.7 940 398C952.8 402.3 970.8 408.8 977 411" stroke="#fff8e4" stroke-width="3" fill="none" transform="translate(0,2.6)"/><path d="M333 293C334.0 294.2 335.8 298.2 339 300.5C342.2 302.8 346.8 304.8 352 307C357.2 309.2 362.0 312.0 370 313.5C378.0 315.0 390.0 316.2 400 316C410.0 315.8 420.0 314.3 430 312C440.0 309.7 450.0 303.5 460 302C470.0 300.5 480.0 301.3 490 303C500.0 304.7 508.3 308.2 520 312C531.7 315.8 546.7 321.7 560 326C573.3 330.3 586.7 334.3 600 338C613.3 341.7 626.7 345.3 640 348C653.3 350.7 660.0 351.0 680 354C700.0 357.0 733.3 362.7 760 366C786.7 369.3 816.7 370.8 840 374C863.3 377.2 883.3 381.0 900 385C916.7 389.0 927.2 393.7 940 398C952.8 402.3 970.8 408.8 977 411" stroke="#ff6a00" stroke-width="2" fill="none"/><ellipse cx="403.5" cy="279" rx="33.8" ry="15" fill="#f4fdff"/><polygon points="349.6,322 364,316 370,330 353,338" fill="#5fd23c" fill-opacity="0.35" stroke="#4fe02c" stroke-width="1"/><polygon points="353,338 370,330 381,339 365,346.4" fill="#3a5ad8" fill-opacity="0.3" stroke="#2c50f0" stroke-width="1"/><polygon points="370,330 372,318 379,320.5 382,336" fill="#d83a2a" fill-opacity="0.3" stroke="#d8281c" stroke-width="1"/><path d="M370 330L360 262" stroke="#4a78ff" stroke-width="1.8"/><polygon points="358,247 351.5,266 365,266.5" fill="#1f4cf5"/><ellipse cx="358.3" cy="266.3" rx="6.8" ry="1.6" fill="#1a3fd8"/><path d="M370 330L427 304.5" stroke="#e8503c" stroke-width="1.4"/><polygon points="440,298.5 423.5,300 430,309.5" fill="#b8281c"/><path d="M370 330L413 358.5" stroke="#58f020" stroke-width="1.8"/><polygon points="429,369.6 410.5,362.5 419,355" fill="#54e81c"/><ellipse cx="414.6" cy="358.8" rx="5.6" ry="3" transform="rotate(-40 414.6 358.8)" fill="#62f52a"/></svg>
<div style="left:0px;top:55px;width:37.7px;height:146.5px;background:#1f2326;border-radius:4px;opacity:0.97;"></div>
<div style="left:11px;top:61px;width:16px;height:1px;background:#4a4d50;"></div>
<div style="left:11px;top:64px;width:16px;height:1px;background:#4a4d50;"></div>
<div style="left:3px;top:73px;width:32px;height:20px;background:#585858;border-radius:3px 3px 0 0"></div>
<div style="left:3px;top:94px;width:32px;height:20px;background:#46607c;border-radius:0"></div>
<div style="left:3px;top:115px;width:32px;height:20px;background:#585858;border-radius:0"></div>
<div style="left:3px;top:136px;width:32px;height:20px;background:#585858;border-radius:0"></div>
<div style="left:3px;top:157px;width:32px;height:20px;background:#585858;border-radius:0"></div>
<div style="left:3px;top:178px;width:32px;height:20px;background:#585858;border-radius:0 0 3px 3px"></div>
<svg style="left:11px;top:75px;opacity:0.88;" width="16" height="16" viewBox="0 0 16 16" ><path d="M4.6 8.6Q4.2 14.4 8.6 14.4Q12.2 14.4 12.5 10.2L12.6 7.4L4.6 7.6Z" fill="#d8d8d8"/><g stroke="#d8d8d8" stroke-width="1.9" stroke-linecap="round"><path d="M5.4 8L4.5 3.6"/><path d="M7.4 7.4L7 1.9"/><path d="M9.5 7.4L9.7 2"/><path d="M11.6 8L12.3 3.8"/><path d="M5 11.4L2.5 8.2"/></g></svg>
<svg style="left:11px;top:96px;" width="16" height="16" viewBox="0 0 16 16" ><path d="M8 2V14M2 8H14" stroke="#d8d8d8" stroke-width="1.1"/><path d="M6 3.6L8 1.2L10 3.6M6 12.4L8 14.8L10 12.4M3.6 6L1.2 8L3.6 10M12.4 6L14.8 8L12.4 10" stroke="#d8d8d8" stroke-width="1.1" fill="none"/></svg>
<svg style="left:11px;top:117px;" width="16" height="16" viewBox="0 0 16 16" ><path d="M8.6 2.2A5.8 5.8 0 0 0 3.6 12.6" stroke="#d8d8d8" stroke-width="1.1" fill="none"/><path d="M7.4 13.8A5.8 5.8 0 0 0 12.4 3.4" stroke="#d8d8d8" stroke-width="1.1" fill="none"/><path d="M1.6 12.7H4.4V9.9" stroke="#d8d8d8" stroke-width="1.1" fill="none"/><path d="M14.4 3.3H11.6V6.1" stroke="#d8d8d8" stroke-width="1.1" fill="none"/></svg>
<svg style="left:11px;top:138px;" width="16" height="16" viewBox="0 0 16 16" ><rect x="1.5" y="1.5" width="13" height="13" stroke="#d8d8d8" stroke-width="1.1" fill="none"/><rect x="1.5" y="10.5" width="4" height="4" stroke="#d8d8d8" stroke-width="1.1" fill="none"/><path d="M6.6 9.4L12 4M8.4 3.8H12.2V7.6" stroke="#d8d8d8" stroke-width="1.1" fill="none"/></svg>
<svg style="left:11px;top:159px;" width="16" height="16" viewBox="0 0 16 16" ><path d="M5 2.5H11M5 13.5H11M2.5 5V11M13.5 5V11" stroke="#d8d8d8" stroke-width="1.1" fill="none"/><g fill="#d8d8d8"><rect x="1" y="1" width="3" height="3"/><rect x="12" y="1" width="3" height="3"/><rect x="1" y="12" width="3" height="3"/><rect x="12" y="12" width="3" height="3"/></g></svg>
<svg style="left:10.5px;top:179.5px;" width="17" height="17" viewBox="0 0 17 17" ><circle cx="8.5" cy="8.5" r="6.2" stroke="#d8d8d8" stroke-width="1" fill="none" opacity="0.8"/><path d="M8.5 4.2V12.8M4.2 8.5H12.8" stroke="#d8d8d8" stroke-width="1.2"/><path d="M6.9 5.6L8.5 3.8L10.1 5.6M6.9 11.4L8.5 13.2L10.1 11.4M5.6 6.9L3.8 8.5L5.6 10.1M11.4 6.9L13.2 8.5L11.4 10.1" stroke="#d8d8d8" stroke-width="1.1" fill="none"/><path d="M12.6 0.6H16.4V4.4Z M0.6 12.6V16.4H4.4Z" fill="#d8d8d8"/></svg>
<div style="left:868.3px;top:55.3px;width:106.6px;height:118.3px;background:rgba(31,35,39,0.95);border-radius:4px;"></div>
<svg style="left:868px;top:55px;" width="108" height="119" viewBox="868 55 108 119" ><defs><linearGradient id="gc1" x1="0" y1="0" x2="1" y2="1"><stop offset="0" stop-color="#d8d8d8"/><stop offset="1" stop-color="#8a8a8a"/></linearGradient><linearGradient id="gc2" x1="1" y1="0" x2="0" y2="1"><stop offset="0" stop-color="#d8d8d8"/><stop offset="1" stop-color="#8a8a8a"/></linearGradient><clipPath id="gpc"><rect x="868.3" y="55.3" width="106.6" height="118.3" rx="4"/></clipPath></defs><g clip-path="url(#gpc)"><polygon points="868.3,79.7 974.9,85.5 974.9,112 960,101 868.3,95.5" fill="#151515" opacity="0.75"/><polygon points="868.3,95.5 960,101 974.9,112 974.9,136 946,132 952,108 868.3,103" fill="#3a3a3a" opacity="0.55"/><polygon points="868.3,103 935,107 940,118 868.3,121" fill="#333" opacity="0.4"/></g><polygon points="920,106 894.5,112 905.5,125.5" fill="url(#gc1)"/><ellipse cx="900" cy="118.8" rx="4" ry="8.6" transform="rotate(-40 900 118.8)" fill="#a8a8a8"/><polygon points="923,106 948.5,112 937.5,125.5" fill="url(#gc2)"/><ellipse cx="943" cy="118.8" rx="4" ry="8.6" transform="rotate(40 943 118.8)" fill="#8c8c8c"/><polygon points="921.5,108 917.4,124.5 926.4,124.5" fill="#d0d0d0"/><ellipse cx="921.9" cy="124.6" rx="4.5" ry="2" fill="#c4c4c4"/><polygon points="921.5,96.5 914.4,77.4 929.6,77.4" fill="#7ed44a"/><ellipse cx="922" cy="77.6" rx="7.6" ry="1.5" fill="#6cc43a"/><polygon points="917,103 904.5,93.5 904.5,101.5" fill="#3c6cf0"/><ellipse cx="907.6" cy="96.9" rx="4.4" ry="5.4" transform="rotate(-40 907.6 96.9)" fill="#4d7cf6"/><polygon points="926,103 939.5,93.5 939.5,101.5" fill="#d8402c"/><ellipse cx="936.4" cy="97" rx="4.4" ry="5.4" transform="rotate(40 936.4 97)" fill="#e25a48"/><polygon points="921.5,96.5 930,100.2 930,109.2 921.5,113.6 913,109.2 913,100.2" fill="#c8c8c8"/><polygon points="921.5,96.5 930,100.2 921.5,104.4 913,100.2" fill="#d6d6d6"/><polygon points="921.5,104.4 930,100.2 930,109.2 921.5,113.6" fill="#bdbdbd"/></svg>
<div style="left:870.5px;top:61px;width:16px;height:1px;background:#4a4d50;"></div>
<div style="left:870.5px;top:64px;width:16px;height:1px;background:#4a4d50;"></div>
<div class="t" style="left:917px;top:60.6px;line-height:16px;font-size:12px;color:#e4e4e4;letter-spacing:0.12px;white-space:nowrap;font-weight:700;">y</div>
<div class="t" style="left:895px;top:84.6px;line-height:16px;font-size:12px;color:#e4e4e4;letter-spacing:0.12px;white-space:nowrap;font-weight:700;">z</div>
<div class="t" style="left:941px;top:84.1px;line-height:16px;font-size:12px;color:#e4e4e4;letter-spacing:0.12px;white-space:nowrap;font-weight:700;">x</div>
<svg style="left:950px;top:68.5px;" width="9" height="10" viewBox="0 0 9 10" ><path d="M2.2 4.5V3A2 2 0 0 1 6 2.4" stroke="#d0d0d0" stroke-width="1.1" fill="none"/><rect x="1" y="4.6" width="7" height="4.8" rx="0.6" fill="#d0d0d0"/></svg>
<svg style="left:896.5px;top:149.5px;" width="11" height="12" viewBox="0 0 11 12" ><path d="M10.4 1L1 6L10.4 11M1 6H10.4" stroke="#c8c8c8" stroke-width="0.9" fill="none"/></svg>
<div class="t" style="left:910.5px;top:148.1px;line-height:16px;font-size:12px;color:#c8c8c8;letter-spacing:0.035px;white-space:nowrap;">Persp</div>
<div style="left:848.2px;top:556px;width:126.8px;height:38px;background:rgba(22,22,20,0.88);border-radius:4px;"></div>
<div style="left:853px;top:563px;width:15px;height:1px;background:#7a7a7a;"></div>
<div style="left:853px;top:566px;width:15px;height:1px;background:#7a7a7a;"></div>
<div class="t" style="left:874px;top:557.1px;line-height:16px;font-size:12px;color:#a8a8a8;letter-spacing:0.321px;white-space:nowrap;">Isolation View</div>
<div style="left:852.5px;top:572.5px;width:118.5px;height:17.5px;background:#5a5a5a;border-radius:3px;"></div>
<div class="t" style="left:852.5px;top:574.1px;line-height:16px;font-size:12px;color:#e8e8e8;letter-spacing:0.25px;white-space:nowrap;width:118.5px;text-align:center;">Exit</div>
<div style="left:0px;top:598px;width:7px;height:342px;background:#383838;"></div>
<div style="left:0px;top:598px;width:7px;height:19px;background:#282828;"></div>
<div style="left:0px;top:617px;width:7px;height:20px;background:#3c3c3c;"></div>
<div style="left:0px;top:636px;width:7px;height:1px;background:#232323;"></div>
<div style="left:0px;top:852px;width:7px;height:1px;background:#232323;"></div>
<div style="left:0px;top:619.5px;width:5px;height:15.5px;background:#4c4c4c;border-radius:0 3px 3px 0;"></div>
<div style="left:0px;top:655px;width:2.5px;height:11px;background:#4a4a4a;border-radius:0 3px 3px 0;"></div>
<div style="left:9px;top:598px;width:968px;height:19px;background:#282828;border-radius:3px 3px 0 0;"></div>
<div style="left:174px;top:598px;width:80px;height:20px;background:#3c3c3c;border-radius:3px 3px 0 0;"></div>
<svg style="left:17px;top:602.0px;" width="14" height="11" viewBox="0 0 14 11" ><path d="M0.5 1.5Q0.5 0.5 1.5 0.5H4.6L6 2H11.5Q12.5 2 12.5 3V9.5Q12.5 10.5 11.5 10.5H1.5Q0.5 10.5 0.5 9.5Z" fill="#c8c8c8"/></svg>
<div class="t" style="left:33.3px;top:600.6px;line-height:16px;font-size:12px;color:#d2d2d2;letter-spacing:0.357px;white-space:nowrap;">Project</div>
<svg style="left:99px;top:602.0px;" width="14" height="11" viewBox="0 0 14 11" ><path d="M0.5 1.5Q0.5 0.5 1.5 0.5H4.6L6 2H11.5Q12.5 2 12.5 3V9.5Q12.5 10.5 11.5 10.5H1.5Q0.5 10.5 0.5 9.5Z" fill="#c8c8c8"/></svg>
<div class="t" style="left:115.3px;top:600.6px;line-height:16px;font-size:12px;color:#d2d2d2;letter-spacing:0.357px;white-space:nowrap;">Project</div>
<svg style="left:181px;top:602.0px;" width="14" height="11" viewBox="0 0 14 11" ><path d="M0.5 1.5Q0.5 0.5 1.5 0.5H4.6L6 2H11.5Q12.5 2 12.5 3V9.5Q12.5 10.5 11.5 10.5H1.5Q0.5 10.5 0.5 9.5Z" fill="#c8c8c8"/></svg>
<div class="t" style="left:197.3px;top:600.6px;line-height:16px;font-size:12px;color:#d2d2d2;letter-spacing:0.357px;white-space:nowrap;">Project</div>
<svg style="left:941px;top:601px;" width="11" height="12" viewBox="0 0 11 12" ><path d="M8.9 5.8V3.6A2.5 2.5 0 0 0 4 3.1" stroke="#d2d2d2" stroke-width="1.2" fill="none"/><rect x="2.2" y="6" width="7.6" height="4.8" rx="0.8" stroke="#d2d2d2" stroke-width="1.2" fill="none"/></svg>
<svg style="left:960.5px;top:601px;" width="6" height="14" viewBox="0 0 6 14" ><rect x="2" y="1.2" width="2" height="2" fill="#d2d2d2"/><rect x="2" y="5.4" width="2" height="2" fill="#d2d2d2"/><rect x="2" y="9.6" width="2" height="2" fill="#d2d2d2"/></svg>
<div style="left:9px;top:617px;width:968px;height:20px;background:#3c3c3c;"></div>
<div style="left:9px;top:637px;width:968px;height:1px;background:#232323;"></div>
<svg style="left:15px;top:621px;" width="14" height="13" viewBox="0 0 14 13" ><path d="M6.8 0.5V12.5M0.8 6.5H12.8" stroke="#d2d2d2" stroke-width="1.6"/></svg>
<svg style="left:32.5px;top:625.0px;" width="7" height="4" viewBox="0 0 7 4" ><path d="M0 0H7L3.5 4Z" fill="#c8c8c8"/></svg>
<div style="left:510px;top:619px;width:317px;height:16px;background:#2a2a2a;border-radius:3px;border:1px solid #212121;"></div>
<svg style="left:514px;top:623px;" width="9" height="9" viewBox="0 0 9 9" ><circle cx="3.4" cy="3.4" r="2.2" stroke="#c0c0c0" stroke-width="1.1" fill="none"/><path d="M5 5L7.6 7.6" stroke="#c0c0c0" stroke-width="1.3"/></svg>
<div style="left:811px;top:619px;width:1px;height:16px;background:#212121;"></div>
<svg style="left:812.5px;top:620.5px;" width="13" height="13" viewBox="0 0 13 13" ><path d="M1.5 7V2.5Q1.5 1.5 2.5 1.5H10.5Q11.5 1.5 11.5 2.5V10.5Q11.5 11.5 10.5 11.5H6" stroke="#c8c8c8" stroke-width="1.1" fill="none"/><rect x="0.8" y="8.2" width="4" height="4" stroke="#c8c8c8" stroke-width="1.1" fill="none"/><path d="M5 8L9.2 3.8M6 3.6H9.4V7" stroke="#c8c8c8" stroke-width="1.1" fill="none"/></svg>
<div style="left:830px;top:618px;width:1px;height:19px;background:#2a2a2a;"></div>
<div style="left:856px;top:618px;width:1px;height:19px;background:#2a2a2a;"></div>
<div style="left:882px;top:618px;width:1px;height:19px;background:#2a2a2a;"></div>
<div style="left:908px;top:618px;width:1px;height:19px;background:#2a2a2a;"></div>
<div style="left:934px;top:618px;width:1px;height:19px;background:#2a2a2a;"></div>
<svg style="left:835.3px;top:620px;" width="15" height="14" viewBox="0 0 15 14" ><circle cx="4.6" cy="9.6" r="3.6" fill="#c8c8c8"/><path d="M3 0.8H8V5H3Z" fill="#c8c8c8"/><path d="M10.2 3.2L14 10H6.6Z" fill="#c8c8c8"/></svg>
<svg style="left:861.2px;top:621px;" width="13" height="12" viewBox="0 0 13 12" ><path d="M5.2 0.8H11.6V6.6L6 12L0.6 6.4Z" fill="#c8c8c8" transform="rotate(8 6 6)"/><circle cx="9.2" cy="3.4" r="1" fill="#3c3c3c"/></svg>
<svg style="left:886.8px;top:620px;" width="14" height="14" viewBox="0 0 14 14" ><circle cx="7" cy="7" r="6.6" fill="#d8d8d8"/><rect x="6" y="2.6" width="2" height="5.6" rx="0.8" fill="#3c3c3c"/><circle cx="7" cy="10.6" r="1.1" fill="#3c3c3c"/></svg>
<svg style="left:914.3px;top:621px;" width="13" height="12" viewBox="0 0 13 12" ><path d="M6.5 0.5L8.2 4.4L12.4 4.8L9.2 7.6L10.2 11.7L6.5 9.5L2.8 11.7L3.8 7.6L0.6 4.8L4.8 4.4Z" fill="#8a8a8a"/></svg>
<svg style="left:939px;top:621px;" width="16" height="12" viewBox="0 0 16 12" ><path d="M1 6.2Q7.5 -1.2 14.5 6.2Q7.5 13 1 6.2Z" stroke="#c8c8c8" stroke-width="1.1" fill="none"/><circle cx="7.8" cy="6" r="1.8" stroke="#c8c8c8" stroke-width="1" fill="none"/><path d="M2.5 11.5L13 0.8" stroke="#c8c8c8" stroke-width="1.2"/></svg>
<div class="t" style="left:956px;top:620.1px;line-height:16px;font-size:12px;color:#d2d2d2;letter-spacing:1.2px;white-space:nowrap;">34</div>
<div style="left:9px;top:638px;width:200px;height:302px;background:#383838;"></div>
<div style="left:209px;top:638px;width:13px;height:302px;background:#353535;"></div>
<div style="left:222px;top:638px;width:1.5px;height:302px;background:#232323;"></div>
<div style="left:9px;top:638px;width:200px;height:16px;background:#4d4d4d;"></div>
<div style="left:9px;top:638px;width:199px;height:302px;overflow:hidden;">
<svg style="left:88px;top:2.8000000000000007px;" width="14" height="11" viewBox="0 0 14 11" ><path d="M0.5 1.5Q0.5 0.5 1.5 0.5H4.6L6 2H11.5Q12.5 2 12.5 3V9.5Q12.5 10.5 11.5 10.5H1.5Q0.5 10.5 0.5 9.5Z" fill="#c2c2c2"/></svg>
<div class="t" style="left:104.4px;top:-0.1000000000000002px;line-height:16px;font-size:12px;color:#c4c4c4;letter-spacing:0.406px;white-space:nowrap;">Textures</div>
<svg style="left:60px;top:18.8px;" width="14" height="11" viewBox="0 0 14 11" ><path d="M0.5 1.5Q0.5 0.5 1.5 0.5H4.6L6 2H11.5Q12.5 2 12.5 3V9.5Q12.5 10.5 11.5 10.5H1.5Q0.5 10.5 0.5 9.5Z" fill="#c2c2c2"/></svg>
<div class="t" style="left:76.4px;top:15.9px;line-height:16px;font-size:12px;color:#c4c4c4;letter-spacing:0.11px;white-space:nowrap;">BCD_Lightmaps</div>
<svg style="left:60px;top:34.8px;" width="14" height="11" viewBox="0 0 14 11" ><path d="M1 1.6Q1 1 1.6 1H4.5L5.8 2.5H11.4Q12 2.5 12 3.1V9.4Q12 10 11.4 10H1.6Q1 10 1 9.4Z" fill="none" stroke="#c2c2c2" stroke-width="1.1"/></svg>
<div class="t" style="left:76.4px;top:31.9px;line-height:16px;font-size:12px;color:#c4c4c4;letter-spacing:0.033px;white-space:nowrap;">BCD_Prefabs</div>
<svg style="left:46.5px;top:51.5px;" width="8" height="9" viewBox="0 0 8 9" ><path d="M0.5 0.3V8.7L7.6 4.5Z" fill="#7a7a7a"/></svg>
<svg style="left:60px;top:50.8px;" width="14" height="11" viewBox="0 0 14 11" ><path d="M0.5 1.5Q0.5 0.5 1.5 0.5H4.6L6 2H11.5Q12.5 2 12.5 3V9.5Q12.5 10.5 11.5 10.5H1.5Q0.5 10.5 0.5 9.5Z" fill="#c2c2c2"/></svg>
<div class="t" style="left:76.4px;top:47.9px;line-height:16px;font-size:12px;color:#c4c4c4;letter-spacing:0.084px;white-space:nowrap;">BCD_Scenes</div>
<svg style="left:60px;top:66.8px;" width="14" height="11" viewBox="0 0 14 11" ><path d="M0.5 1.5Q0.5 0.5 1.5 0.5H4.6L6 2H11.5Q12.5 2 12.5 3V9.5Q12.5 10.5 11.5 10.5H1.5Q0.5 10.5 0.5 9.5Z" fill="#c2c2c2"/></svg>
<div class="t" style="left:76.4px;top:63.9px;line-height:16px;font-size:12px;color:#c4c4c4;letter-spacing:-0.032px;white-space:nowrap;">BCD_Shaders</div>
<svg style="left:32.5px;top:83.5px;" width="8" height="9" viewBox="0 0 8 9" ><path d="M0.5 0.3V8.7L7.6 4.5Z" fill="#7a7a7a"/></svg>
<svg style="left:46px;top:82.8px;" width="14" height="11" viewBox="0 0 14 11" ><path d="M0.5 1.5Q0.5 0.5 1.5 0.5H4.6L6 2H11.5Q12.5 2 12.5 3V9.5Q12.5 10.5 11.5 10.5H1.5Q0.5 10.5 0.5 9.5Z" fill="#c2c2c2"/></svg>
<div class="t" style="left:62.400000000000006px;top:79.89999999999999px;line-height:16px;font-size:12px;color:#c4c4c4;letter-spacing:0.12px;white-space:nowrap;">BCD_3DAssets</div>
<svg style="left:32.5px;top:99.5px;" width="8" height="9" viewBox="0 0 8 9" ><path d="M0.5 0.3V8.7L7.6 4.5Z" fill="#7a7a7a"/></svg>
<svg style="left:46px;top:98.8px;" width="14" height="11" viewBox="0 0 14 11" ><path d="M0.5 1.5Q0.5 0.5 1.5 0.5H4.6L6 2H11.5Q12.5 2 12.5 3V9.5Q12.5 10.5 11.5 10.5H1.5Q0.5 10.5 0.5 9.5Z" fill="#c2c2c2"/></svg>
<div class="t" style="left:62.400000000000006px;top:95.89999999999999px;line-height:16px;font-size:12px;color:#c4c4c4;letter-spacing:0.094px;white-space:nowrap;">BCD_Animations</div>
<svg style="left:46px;top:114.8px;" width="14" height="11" viewBox="0 0 14 11" ><path d="M1 1.6Q1 1 1.6 1H4.5L5.8 2.5H11.4Q12 2.5 12 3.1V9.4Q12 10 11.4 10H1.6Q1 10 1 9.4Z" fill="none" stroke="#c2c2c2" stroke-width="1.1"/></svg>
<div class="t" style="left:62.400000000000006px;top:111.89999999999999px;line-height:16px;font-size:12px;color:#c4c4c4;letter-spacing:-0.112px;white-space:nowrap;">BCD_App</div>
<svg style="left:31.0px;top:132.5px;" width="10" height="8" viewBox="0 0 10 8" ><path d="M0.3 0.5H9.7L5 7.6Z" fill="#7a7a7a"/></svg>
<svg style="left:46px;top:130.8px;" width="14" height="11" viewBox="0 0 14 11" ><path d="M1 9.6V1.6Q1 1 1.6 1H4.5L5.8 2.5H10.4Q11 2.5 11 3.1V4.3" fill="none" stroke="#c2c2c2" stroke-width="1.1"/><path d="M0.8 10.5L3.2 4.6H13.6L11.4 10.5Z" fill="#c2c2c2"/></svg>
<div class="t" style="left:62.400000000000006px;top:127.9px;line-height:16px;font-size:12px;color:#c4c4c4;letter-spacing:-0.085px;white-space:nowrap;">BCD_GLTF</div>
<svg style="left:45.0px;top:148.5px;" width="10" height="8" viewBox="0 0 10 8" ><path d="M0.3 0.5H9.7L5 7.6Z" fill="#7a7a7a"/></svg>
<svg style="left:60px;top:146.8px;" width="14" height="11" viewBox="0 0 14 11" ><path d="M1 9.6V1.6Q1 1 1.6 1H4.5L5.8 2.5H10.4Q11 2.5 11 3.1V4.3" fill="none" stroke="#c2c2c2" stroke-width="1.1"/><path d="M0.8 10.5L3.2 4.6H13.6L11.4 10.5Z" fill="#c2c2c2"/></svg>
<div class="t" style="left:76.4px;top:143.9px;line-height:16px;font-size:12px;color:#c4c4c4;letter-spacing:-0.317px;white-space:nowrap;">BCD_1.0</div>
<svg style="left:60.5px;top:163.5px;" width="8" height="9" viewBox="0 0 8 9" ><path d="M0.5 0.3V8.7L7.6 4.5Z" fill="#7a7a7a"/></svg>
<svg style="left:74px;top:162.8px;" width="14" height="11" viewBox="0 0 14 11" ><path d="M0.5 1.5Q0.5 0.5 1.5 0.5H4.6L6 2H11.5Q12.5 2 12.5 3V9.5Q12.5 10.5 11.5 10.5H1.5Q0.5 10.5 0.5 9.5Z" fill="#c2c2c2"/></svg>
<div class="t" style="left:90.4px;top:159.9px;line-height:16px;font-size:12px;color:#c4c4c4;letter-spacing:0.102px;white-space:nowrap;">BCD_3DAssets</div>
<svg style="left:60.5px;top:179.5px;" width="8" height="9" viewBox="0 0 8 9" ><path d="M0.5 0.3V8.7L7.6 4.5Z" fill="#7a7a7a"/></svg>
<svg style="left:74px;top:178.8px;" width="14" height="11" viewBox="0 0 14 11" ><path d="M0.5 1.5Q0.5 0.5 1.5 0.5H4.6L6 2H11.5Q12.5 2 12.5 3V9.5Q12.5 10.5 11.5 10.5H1.5Q0.5 10.5 0.5 9.5Z" fill="#c2c2c2"/></svg>
<div class="t" style="left:90.4px;top:175.9px;line-height:16px;font-size:12px;color:#c4c4c4;letter-spacing:0.003px;white-space:nowrap;">BCD_Bundles</div>
<svg style="left:60.5px;top:195.5px;" width="8" height="9" viewBox="0 0 8 9" ><path d="M0.5 0.3V8.7L7.6 4.5Z" fill="#7a7a7a"/></svg>
<svg style="left:74px;top:194.8px;" width="14" height="11" viewBox="0 0 14 11" ><path d="M0.5 1.5Q0.5 0.5 1.5 0.5H4.6L6 2H11.5Q12.5 2 12.5 3V9.5Q12.5 10.5 11.5 10.5H1.5Q0.5 10.5 0.5 9.5Z" fill="#c2c2c2"/></svg>
<div class="t" style="left:90.4px;top:191.9px;line-height:16px;font-size:12px;color:#c4c4c4;letter-spacing:-0.006px;white-space:nowrap;">BCD_Scene</div>
<svg style="left:45.0px;top:212.5px;" width="10" height="8" viewBox="0 0 10 8" ><path d="M0.3 0.5H9.7L5 7.6Z" fill="#7a7a7a"/></svg>
<svg style="left:60px;top:210.8px;" width="14" height="11" viewBox="0 0 14 11" ><path d="M1 9.6V1.6Q1 1 1.6 1H4.5L5.8 2.5H10.4Q11 2.5 11 3.1V4.3" fill="none" stroke="#c2c2c2" stroke-width="1.1"/><path d="M0.8 10.5L3.2 4.6H13.6L11.4 10.5Z" fill="#c2c2c2"/></svg>
<div class="t" style="left:76.4px;top:207.9px;line-height:16px;font-size:12px;color:#c4c4c4;letter-spacing:-0.167px;white-space:nowrap;">BCD_2.0</div>
<svg style="left:59.0px;top:228.5px;" width="10" height="8" viewBox="0 0 10 8" ><path d="M0.3 0.5H9.7L5 7.6Z" fill="#7a7a7a"/></svg>
<svg style="left:74px;top:226.8px;" width="14" height="11" viewBox="0 0 14 11" ><path d="M1 9.6V1.6Q1 1 1.6 1H4.5L5.8 2.5H10.4Q11 2.5 11 3.1V4.3" fill="none" stroke="#c2c2c2" stroke-width="1.1"/><path d="M0.8 10.5L3.2 4.6H13.6L11.4 10.5Z" fill="#c2c2c2"/></svg>
<div class="t" style="left:90.4px;top:223.9px;line-height:16px;font-size:12px;color:#c4c4c4;letter-spacing:0.102px;white-space:nowrap;">BCD_3DAssets</div>
<svg style="left:88px;top:242.8px;" width="14" height="11" viewBox="0 0 14 11" ><path d="M0.5 1.5Q0.5 0.5 1.5 0.5H4.6L6 2H11.5Q12.5 2 12.5 3V9.5Q12.5 10.5 11.5 10.5H1.5Q0.5 10.5 0.5 9.5Z" fill="#c2c2c2"/></svg>
<div class="t" style="left:104.4px;top:239.9px;line-height:16px;font-size:12px;color:#c4c4c4;letter-spacing:0.157px;white-space:nowrap;">BCD2_Skyboxes</div>
<svg style="left:73.0px;top:260.5px;" width="10" height="8" viewBox="0 0 10 8" ><path d="M0.3 0.5H9.7L5 7.6Z" fill="#7a7a7a"/></svg>
<svg style="left:88px;top:258.8px;" width="14" height="11" viewBox="0 0 14 11" ><path d="M1 9.6V1.6Q1 1 1.6 1H4.5L5.8 2.5H10.4Q11 2.5 11 3.1V4.3" fill="none" stroke="#c2c2c2" stroke-width="1.1"/><path d="M0.8 10.5L3.2 4.6H13.6L11.4 10.5Z" fill="#c2c2c2"/></svg>
<div class="t" style="left:104.4px;top:255.9px;line-height:16px;font-size:12px;color:#c4c4c4;letter-spacing:-0.323px;white-space:nowrap;">L_BCD_2_001</div>
<svg style="left:87.0px;top:276.5px;" width="10" height="8" viewBox="0 0 10 8" ><path d="M0.3 0.5H9.7L5 7.6Z" fill="#7a7a7a"/></svg>
<svg style="left:102px;top:274.8px;" width="14" height="11" viewBox="0 0 14 11" ><path d="M1 9.6V1.6Q1 1 1.6 1H4.5L5.8 2.5H10.4Q11 2.5 11 3.1V4.3" fill="none" stroke="#c2c2c2" stroke-width="1.1"/><path d="M0.8 10.5L3.2 4.6H13.6L11.4 10.5Z" fill="#c2c2c2"/></svg>
<div class="t" style="left:118.4px;top:271.90000000000003px;line-height:16px;font-size:12px;color:#c4c4c4;letter-spacing:-0.547px;white-space:nowrap;">ARCHITECTURE</div>
<svg style="left:102.5px;top:291.5px;" width="8" height="9" viewBox="0 0 8 9" ><path d="M0.5 0.3V8.7L7.6 4.5Z" fill="#7a7a7a"/></svg>
<svg style="left:116px;top:290.8px;" width="14" height="11" viewBox="0 0 14 11" ><path d="M0.5 1.5Q0.5 0.5 1.5 0.5H4.6L6 2H11.5Q12.5 2 12.5 3V9.5Q12.5 10.5 11.5 10.5H1.5Q0.5 10.5 0.5 9.5Z" fill="#c2c2c2"/></svg>
<div class="t" style="left:132.4px;top:287.90000000000003px;line-height:16px;font-size:12px;color:#c4c4c4;letter-spacing:0.055px;white-space:nowrap;">PK_BCD-2_001</div>
</div>
<svg style="left:212px;top:643.5px;" width="8" height="5" viewBox="0 0 8 5" ><path d="M0 5H8L4 0Z" fill="#c0c0c0"/></svg>
<div style="left:211px;top:666px;width:9px;height:32px;background:#5f5f5f;border-radius:4.5px;"></div>
<svg style="left:212px;top:933.5px;" width="8" height="5" viewBox="0 0 8 5" ><path d="M0 0H8L4 5Z" fill="#c0c0c0"/></svg>
<div style="left:223.5px;top:638px;width:753.5px;height:21px;background:#3c3c3c;"></div>
<div style="left:223.5px;top:659px;width:753.5px;height:265px;background:#333333;"></div>
<div style="left:223.5px;top:924px;width:753.5px;height:16px;background:#3c3c3c;"></div>
<div class="t" style="left:227.7px;top:639.6px;line-height:16px;font-size:12px;color:#bdbdbd;letter-spacing:-0.003px;white-space:nowrap;">Assets</div>
<div class="t" style="left:282.2px;top:639.6px;line-height:16px;font-size:12px;color:#bdbdbd;letter-spacing:0.155px;white-space:nowrap;">BCDAssets</div>
<div class="t" style="left:363.4px;top:639.6px;line-height:16px;font-size:12px;color:#bdbdbd;letter-spacing:-0.184px;white-space:nowrap;">BCD_2.0</div>
<div class="t" style="left:430px;top:639.6px;line-height:16px;font-size:12px;color:#bdbdbd;letter-spacing:0.148px;white-space:nowrap;">BCD_3DAssets</div>
<div class="t" style="left:533.2px;top:639.6px;line-height:16px;font-size:12px;color:#bdbdbd;letter-spacing:0.008px;white-space:nowrap;">08_BCD_Blessing</div>
<div class="t" style="left:649.3px;top:639.6px;line-height:16px;font-size:12px;color:#cfcfcf;letter-spacing:0.366px;white-space:nowrap;font-weight:700;">Textures</div>
<svg style="left:270.1px;top:643.5px;" width="7" height="10" viewBox="0 0 7 10" ><path d="M1 0.8L6 5L1 9.2" stroke="#9a9a9a" stroke-width="1.2" fill="none"/></svg>
<svg style="left:350.5px;top:643.5px;" width="7" height="10" viewBox="0 0 7 10" ><path d="M1 0.8L6 5L1 9.2" stroke="#9a9a9a" stroke-width="1.2" fill="none"/></svg>
<svg style="left:417.5px;top:643.5px;" width="7" height="10" viewBox="0 0 7 10" ><path d="M1 0.8L6 5L1 9.2" stroke="#9a9a9a" stroke-width="1.2" fill="none"/></svg>
<svg style="left:521.1px;top:643.5px;" width="7" height="10" viewBox="0 0 7 10" ><path d="M1 0.8L6 5L1 9.2" stroke="#9a9a9a" stroke-width="1.2" fill="none"/></svg>
<svg style="left:637.3px;top:643.5px;" width="7" height="10" viewBox="0 0 7 10" ><path d="M1 0.8L6 5L1 9.2" stroke="#9a9a9a" stroke-width="1.2" fill="none"/></svg>
<div style="left:223.5px;top:659px;width:740px;height:265px;overflow:hidden;">
<svg style="left:15.5px;top:-4px;" width="16" height="15" viewBox="0 0 16 16" preserveAspectRatio="none"><rect width="16" height="16" fill="#484848"/><rect y="5" width="16" height="1.6" fill="#8c8c8c"/><rect y="9.5" width="16" height="2" fill="#7a7a7a"/><rect y="13.5" width="16" height="1.5" fill="#6a6a6a"/></svg>
<div class="t" style="left:33.80000000000001px;top:-3.1px;line-height:16px;font-size:12px;color:#c4c4c4;letter-spacing:0.185px;white-space:nowrap;">ASPHALT_001_basecolor</div>
<svg style="left:15.5px;top:12px;" width="16" height="15" viewBox="0 0 16 16" preserveAspectRatio="none"><rect width="16" height="16" fill="#8080fc"/></svg>
<div class="t" style="left:33.80000000000001px;top:12.9px;line-height:16px;font-size:12px;color:#c4c4c4;letter-spacing:0.074px;white-space:nowrap;">ASPHALT_001_normal</div>
<svg style="left:15.5px;top:28px;" width="16" height="15" viewBox="0 0 16 16" preserveAspectRatio="none"><rect width="16" height="16" fill="#e4e4e4"/><rect y="5" width="16" height="0.8" fill="#b0b0b0"/><rect y="10.5" width="16" height="0.8" fill="#b8b8b8"/></svg>
<div class="t" style="left:33.80000000000001px;top:28.9px;line-height:16px;font-size:12px;color:#c4c4c4;letter-spacing:0.115px;white-space:nowrap;">ASPHALT_001_roughness</div>
<svg style="left:15.5px;top:44px;" width="16" height="15" viewBox="0 0 16 16" preserveAspectRatio="none"><rect width="16" height="16" fill="#1c4fb0"/><rect x="2" y="1" width="3.5" height="12" fill="#c8ccd8"/><circle cx="11" cy="5" r="3.8" fill="#a8acb4"/><rect x="8" y="10" width="6" height="6" fill="#dcdce0"/></svg>
<div class="t" style="left:33.80000000000001px;top:44.9px;line-height:16px;font-size:12px;color:#c4c4c4;letter-spacing:0.131px;white-space:nowrap;">Blessing_H_body_Blessing_hancock Sculpture_AlbedoTransparency_sRGB.1001</div>
<svg style="left:15.5px;top:60px;" width="16" height="15" viewBox="0 0 16 16" preserveAspectRatio="none"><rect width="16" height="16" fill="#000"/><rect x="0" y="2" width="2" height="14" fill="#fff"/><rect x="3" y="0" width="3" height="13" fill="#fff"/><path d="M9 16V10L12 9V6H16V12L13 13V16Z" fill="#fff"/></svg>
<div class="t" style="left:33.80000000000001px;top:60.9px;line-height:16px;font-size:12px;color:#c4c4c4;letter-spacing:0.165px;white-space:nowrap;">Blessing_H_body_Blessing_hancock Sculpture_MetallicSmoothness_Raw.1001</div>
<svg style="left:15.5px;top:76px;" width="16" height="15" viewBox="0 0 16 16" preserveAspectRatio="none"><rect width="16" height="16" fill="#8080fc"/></svg>
<div class="t" style="left:33.80000000000001px;top:76.89999999999999px;line-height:16px;font-size:12px;color:#c4c4c4;letter-spacing:0.107px;white-space:nowrap;">Blessing_H_body_Blessing_hancock Sculpture_Normal_Raw.1001</div>
<svg style="left:15.5px;top:92px;" width="16" height="15" viewBox="0 0 16 16" preserveAspectRatio="none"><rect width="16" height="16" fill="#fcfcfc"/><rect x="4" y="5" width="0.8" height="6" fill="#c0c0c0"/></svg>
<div class="t" style="left:33.80000000000001px;top:92.89999999999999px;line-height:16px;font-size:12px;color:#c4c4c4;letter-spacing:0.167px;white-space:nowrap;">Blessing_hancock Sculpture_Opacity_Raw_1001</div>
<svg style="left:15.5px;top:108px;" width="16" height="15" viewBox="0 0 16 16" preserveAspectRatio="none"><rect width="16" height="16" fill="#4a4a4a"/><rect y="9" width="16" height="7" fill="#585858"/><circle cx="12.5" cy="3.5" r="4.6" fill="#d4d4d4"/></svg>
<div class="t" style="left:33.80000000000001px;top:108.89999999999999px;line-height:16px;font-size:12px;color:#c4c4c4;letter-spacing:0.118px;white-space:nowrap;">Blessing_hancock Sculpture_Roughness_Raw_1001</div>
<svg style="left:15.5px;top:124px;" width="16" height="15" viewBox="0 0 16 16" preserveAspectRatio="none"><rect width="16" height="16" fill="#463826"/><path d="M2 4L6 8L3 12M8 2L12 7L9 13M13 4L11 9M5 13L8 10" stroke="#8a5826" stroke-width="1.4" fill="none"/></svg>
<div class="t" style="left:33.80000000000001px;top:124.9px;line-height:16px;font-size:12px;color:#c4c4c4;letter-spacing:0.089px;white-space:nowrap;">Blessing_soil_basecolor</div>
<svg style="left:15.5px;top:140px;" width="16" height="15" viewBox="0 0 16 16" preserveAspectRatio="none"><rect width="16" height="16" fill="#4a4e22"/></svg>
<div class="t" style="left:33.80000000000001px;top:140.9px;line-height:16px;font-size:12px;color:#c4c4c4;letter-spacing:0.09px;white-space:nowrap;">Bush_001_basecolor</div>
<svg style="left:15.5px;top:156px;" width="16" height="15" viewBox="0 0 16 16" preserveAspectRatio="none"><rect width="16" height="16" fill="#8080fc"/></svg>
<div class="t" style="left:33.80000000000001px;top:156.9px;line-height:16px;font-size:12px;color:#c4c4c4;letter-spacing:-0.022px;white-space:nowrap;">Bush_001_normal</div>
<svg style="left:15.5px;top:172px;" width="16" height="15" viewBox="0 0 16 16" preserveAspectRatio="none"><rect width="16" height="16" fill="#8c8c8c"/><path d="M0 4L16 8M0 11L16 13" stroke="#a4a4a4" stroke-width="1.5"/></svg>
<div class="t" style="left:33.80000000000001px;top:172.9px;line-height:16px;font-size:12px;color:#c4c4c4;letter-spacing:0.055px;white-space:nowrap;">Bush_001_roughness</div>
<svg style="left:15.5px;top:188px;" width="16" height="15" viewBox="0 0 16 16" preserveAspectRatio="none"><rect width="16" height="16" fill="#5c7a30"/><path d="M1 16Q3 9 6 6Q9 9 10 16Z" fill="#bcb8a4"/><path d="M12 16Q13 9 16 7V16Z" fill="#b0ac98"/><circle cx="11" cy="4" r="3" fill="#7c9c44"/></svg>
<div class="t" style="left:33.80000000000001px;top:188.9px;line-height:16px;font-size:12px;color:#c4c4c4;letter-spacing:-0.049px;white-space:nowrap;">Low_res_tree_short_Color</div>
<svg style="left:15.5px;top:204px;" width="16" height="15" viewBox="0 0 16 16" preserveAspectRatio="none"><rect width="16" height="16" fill="#6878f4"/><path d="M0 0H7L3 9L0 12Z" fill="#44c0f0"/><path d="M5 16L9 7L15 16Z" fill="#ee6cc0"/><path d="M9 0L16 5V0Z" fill="#8c64f0"/><circle cx="5" cy="10" r="2.4" fill="#5048e0"/></svg>
<div class="t" style="left:33.80000000000001px;top:204.9px;line-height:16px;font-size:12px;color:#c4c4c4;letter-spacing:-0.042px;white-space:nowrap;">Low_res_tree_short_Normal</div>
<svg style="left:15.5px;top:220px;" width="16" height="15" viewBox="0 0 16 16" preserveAspectRatio="none"><rect width="16" height="16" fill="#6e5c48"/><rect x="6.5" y="0" width="9.5" height="16" fill="#6c7a2c"/><rect x="8" y="3" width="2" height="13" fill="#90a040"/><rect x="11.5" y="3" width="2" height="13" fill="#88983a"/><rect x="7.5" y="0" width="8.5" height="3.5" fill="#b8b490"/></svg>
<div class="t" style="left:33.80000000000001px;top:220.9px;line-height:16px;font-size:12px;color:#c4c4c4;letter-spacing:0.007px;white-space:nowrap;">PALM_A_Color</div>
<svg style="left:15.5px;top:236px;" width="16" height="15" viewBox="0 0 16 16" preserveAspectRatio="none"><rect width="16" height="16" fill="#8080fc"/><rect x="8" width="4" height="16" fill="#8c78f4"/></svg>
<div class="t" style="left:33.80000000000001px;top:236.9px;line-height:16px;font-size:12px;color:#c4c4c4;letter-spacing:-0.026px;white-space:nowrap;">PALM_A_Normal</div>
<svg style="left:15.5px;top:252px;" width="16" height="15" viewBox="0 0 16 16" preserveAspectRatio="none"><rect width="16" height="16" fill="#6e5c48"/><rect x="6.5" y="0" width="9.5" height="16" fill="#6c7a2c"/><rect x="8" y="3" width="2" height="13" fill="#90a040"/><rect x="11.5" y="3" width="2" height="13" fill="#88983a"/><rect x="7.5" y="0" width="8.5" height="3.5" fill="#b8b490"/></svg>
<div class="t" style="left:33.80000000000001px;top:252.9px;line-height:16px;font-size:12px;color:#c4c4c4;letter-spacing:0.007px;white-space:nowrap;">PALM_B_Color</div>
</div>
<div style="left:964px;top:659px;width:13px;height:265px;background:#353535;"></div>
<svg style="left:966.5px;top:664.5px;" width="8" height="5" viewBox="0 0 8 5" ><path d="M0 5H8L4 0Z" fill="#c0c0c0"/></svg>
<div style="left:966px;top:676px;width:9.5px;height:122.5px;background:#5f5f5f;border-radius:4.7px;"></div>
<svg style="left:966.5px;top:913.5px;" width="8" height="5" viewBox="0 0 8 5" ><path d="M0 0H8L4 5Z" fill="#c0c0c0"/></svg>
<div style="left:911px;top:933px;width:50px;height:1.5px;background:#5a5a5a;"></div>
<div style="left:906px;top:929px;width:10px;height:10px;background:#999999;border-radius:5px;"></div>
<div style="left:979px;top:8px;width:522px;height:19px;background:#282828;border-radius:3px 0 0 0;"></div>
<div style="left:979px;top:8px;width:93px;height:20px;background:#3c3c3c;border-radius:3px 3px 0 0;"></div>
<div style="left:979px;top:27px;width:522px;height:913px;background:#383838;"></div>
<svg style="left:988px;top:13px;" width="10" height="10" viewBox="0 0 10 10" ><circle cx="5" cy="5" r="5" fill="#d2d2d2"/><rect x="4.2" y="4.2" width="1.7" height="3.8" fill="#3c3c3c"/><circle cx="5.05" cy="2.6" r="1" fill="#3c3c3c"/></svg>
<div class="t" style="left:1003.3px;top:10.6px;line-height:16px;font-size:12px;color:#d2d2d2;letter-spacing:0.293px;white-space:nowrap;">Inspector</div>
<div class="t" style="left:1080px;top:10.6px;line-height:16px;font-size:12px;color:#d2d2d2;letter-spacing:0.278px;white-space:nowrap;">Build Settings</div>
<svg style="left:1179.5px;top:12px;" width="12" height="12" viewBox="0 0 12 12" ><circle cx="6" cy="6" r="5" stroke="#141414" stroke-width="1.6" fill="none"/><path d="M3.5 3.5L7 6L5 9" stroke="#141414" stroke-width="1.4" fill="none"/></svg>
<div class="t" style="left:1196px;top:10.6px;line-height:16px;font-size:12px;color:#d2d2d2;letter-spacing:0.328px;white-space:nowrap;">Bakery</div>
<svg style="left:1263.5px;top:12px;" width="9" height="12" viewBox="0 0 9 12" ><path d="M4.5 0.5A3.9 3.9 0 0 1 6.6 7.6V8.6H2.4V7.6A3.9 3.9 0 0 1 4.5 0.5Z" fill="#d2d2d2"/><rect x="2.6" y="9.2" width="3.8" height="1.1" rx="0.5" fill="#d2d2d2"/><rect x="3.2" y="10.7" width="2.6" height="0.9" rx="0.4" fill="#d2d2d2"/></svg>
<div class="t" style="left:1278px;top:10.6px;line-height:16px;font-size:12px;color:#d2d2d2;letter-spacing:0.365px;white-space:nowrap;">Lighting</div>
<svg style="left:1471px;top:11px;" width="11" height="12" viewBox="0 0 11 12" ><path d="M8.9 5.8V3.6A2.5 2.5 0 0 0 4 3.1" stroke="#d2d2d2" stroke-width="1.2" fill="none"/><rect x="2.2" y="6" width="7.6" height="4.8" rx="0.8" stroke="#d2d2d2" stroke-width="1.2" fill="none"/></svg>
<svg style="left:1490px;top:11px;" width="6" height="14" viewBox="0 0 6 14" ><rect x="2" y="1.2" width="2" height="2" fill="#d2d2d2"/><rect x="2" y="5.6" width="2" height="2" fill="#d2d2d2"/><rect x="2" y="10" width="2" height="2" fill="#d2d2d2"/></svg>
<div style="left:1494px;top:27px;width:7px;height:913px;background:#353535;"></div>
<svg style="left:1494.5px;top:32px;" width="6" height="4" viewBox="0 0 6 4" ><path d="M0 4H6L3 0Z" fill="#a0a0a0"/></svg>
<div style="left:1495px;top:136px;width:6px;height:655px;background:#5a5a5a;border-radius:3px 0 0 3px;"></div>
<svg style="left:1494.5px;top:930px;" width="6" height="4" viewBox="0 0 6 4" ><path d="M0 0H6L3 4Z" fill="#a0a0a0"/></svg>
<div class="t" style="left:998.4px;top:27.6px;line-height:16px;font-size:12px;color:#c4c4c4;letter-spacing:0.25px;white-space:nowrap;">Rotation</div>
<div class="t" style="left:1192.7px;top:27.6px;line-height:16px;font-size:12px;color:#c4c4c4;letter-spacing:0.25px;white-space:nowrap;">X</div>
<div style="left:1206.5px;top:26px;width:81px;height:17px;background:#2a2a2a;border-radius:3px;border:1px solid #212121;border-top-color:#0d0d0d;"></div>
<div class="t" style="left:1209.5px;top:27.6px;line-height:16px;font-size:12px;color:#d2d2d2;letter-spacing:0.25px;white-space:nowrap;">-89.98</div>
<div class="t" style="left:1293px;top:27.6px;line-height:16px;font-size:12px;color:#c4c4c4;letter-spacing:0.25px;white-space:nowrap;">Y</div>
<div style="left:1307px;top:26px;width:81px;height:17px;background:#2a2a2a;border-radius:3px;border:1px solid #212121;border-top-color:#0d0d0d;"></div>
<div class="t" style="left:1310px;top:27.6px;line-height:16px;font-size:12px;color:#d2d2d2;letter-spacing:0.25px;white-space:nowrap;">0</div>
<div class="t" style="left:1395px;top:27.6px;line-height:16px;font-size:12px;color:#c4c4c4;letter-spacing:0.25px;white-space:nowrap;">Z</div>
<div style="left:1408.5px;top:26px;width:81px;height:17px;background:#2a2a2a;border-radius:3px;border:1px solid #212121;border-top-color:#0d0d0d;"></div>
<div class="t" style="left:1411.5px;top:27.6px;line-height:16px;font-size:12px;color:#d2d2d2;letter-spacing:0.25px;white-space:nowrap;">0</div>
<div class="t" style="left:998.4px;top:47.6px;line-height:16px;font-size:12px;color:#c4c4c4;letter-spacing:0.25px;white-space:nowrap;">Scale</div>
<div class="t" style="left:1192.7px;top:47.6px;line-height:16px;font-size:12px;color:#c4c4c4;letter-spacing:0.25px;white-space:nowrap;">X</div>
<div style="left:1206.5px;top:46px;width:81px;height:17px;background:#2a2a2a;border-radius:3px;border:1px solid #212121;border-top-color:#0d0d0d;"></div>
<div class="t" style="left:1209.5px;top:47.6px;line-height:16px;font-size:12px;color:#d2d2d2;letter-spacing:0.25px;white-space:nowrap;">100</div>
<div class="t" style="left:1293px;top:47.6px;line-height:16px;font-size:12px;color:#c4c4c4;letter-spacing:0.25px;white-space:nowrap;">Y</div>
<div style="left:1307px;top:46px;width:81px;height:17px;background:#2a2a2a;border-radius:3px;border:1px solid #212121;border-top-color:#0d0d0d;"></div>
<div class="t" style="left:1310px;top:47.6px;line-height:16px;font-size:12px;color:#d2d2d2;letter-spacing:0.25px;white-space:nowrap;">100</div>
<div class="t" style="left:1395px;top:47.6px;line-height:16px;font-size:12px;color:#c4c4c4;letter-spacing:0.25px;white-space:nowrap;">Z</div>
<div style="left:1408.5px;top:46px;width:81px;height:17px;background:#2a2a2a;border-radius:3px;border:1px solid #212121;border-top-color:#0d0d0d;"></div>
<div class="t" style="left:1411.5px;top:47.6px;line-height:16px;font-size:12px;color:#d2d2d2;letter-spacing:0.25px;white-space:nowrap;">100</div>
<svg style="left:1170px;top:49.5px;" width="13" height="11" viewBox="0 0 13 11" ><path d="M4.6 3H3.4A2.5 2.5 0 0 0 3.4 8H5M8 3H9.6A2.5 2.5 0 0 1 9.6 8H8.4M4.5 5.5H8.5" stroke="#b8b8b8" stroke-width="1.1" fill="none"/><path d="M1.2 0.8L11.6 10.2" stroke="#b8b8b8" stroke-width="1.1"/></svg>
<div style="left:1072px;top:26px;width:408px;height:1.5px;background:#282828;"></div>
<div style="left:979px;top:73px;width:515px;height:1px;background:#1a1a1a;"></div>
<div style="left:979px;top:74px;width:515px;height:20px;background:#3e3e3e;"></div>
<div style="left:979px;top:94px;width:515px;height:1px;background:#303030;"></div>
<svg style="left:985px;top:81.0px;" width="10" height="8" viewBox="0 0 10 8" ><path d="M0.3 0.3H9.3L4.8 7.6Z" fill="#7c7c7c"/></svg>
<svg style="left:999.5px;top:77px;" width="14" height="14" viewBox="0 0 14 14" ><rect x="0.8" y="0.8" width="12.4" height="12.4" rx="1" stroke="#74c8f0" stroke-width="1" fill="none"/><path d="M5 1V13M9 1V13M1 5H13M1 9H13" stroke="#74c8f0" stroke-width="1"/></svg>
<div class="t" style="left:1039.2px;top:77.1px;line-height:16px;font-size:12px;color:#d6d6d6;letter-spacing:0.047px;white-space:nowrap;font-weight:700;">SM_DECAL_Ground (Mesh Filter)</div>
<svg style="left:1436px;top:78.5px;" width="11" height="11" viewBox="0 0 11 11" ><circle cx="5.5" cy="5.5" r="5.4" fill="#d2d2d2"/><path d="M3.7 4.3A1.9 1.9 0 1 1 5.6 6.2V7" stroke="#3e3e3e" stroke-width="1.3" fill="none"/><circle cx="5.6" cy="8.6" r="0.8" fill="#3e3e3e"/></svg>
<svg style="left:1455.7px;top:78px;" width="12" height="12" viewBox="0 0 12 12" ><path d="M0.5 3.5H11.5M0.5 8.5H11.5" stroke="#d2d2d2" stroke-width="1.2"/><path d="M7.5 1V6M4.3 6V11" stroke="#d2d2d2" stroke-width="1.6"/><path d="M7.5 3.5H11.5M0.5 8.5H4.3" stroke="#383838" stroke-width="0"/></svg>
<svg style="left:1479px;top:77.5px;" width="6" height="14" viewBox="0 0 6 14" ><rect x="2" y="1" width="2" height="2" fill="#d2d2d2"/><rect x="2" y="5.5" width="2" height="2" fill="#d2d2d2"/><rect x="2" y="10" width="2" height="2" fill="#d2d2d2"/></svg>
<div class="t" style="left:998.4px;top:99.6px;line-height:16px;font-size:12px;color:#c4c4c4;letter-spacing:0.25px;white-space:nowrap;">Mesh</div>
<div style="left:1198px;top:98px;width:292px;height:17px;background:#2a2a2a;border-radius:3px;border:1px solid #212121;border-top-color:#0d0d0d;"></div>
<svg style="left:1202px;top:101.5px;" width="10" height="10" viewBox="0 0 10 10" ><rect x="0.5" y="0.5" width="9" height="9" stroke="#4f9fc8" stroke-width="1" fill="none"/><path d="M3.5 0.5V9.5M6.5 0.5V9.5M0.5 3.5H9.5M0.5 6.5H9.5" stroke="#4f9fc8" stroke-width="0.9"/></svg>
<div class="t" style="left:1215.5px;top:99.6px;line-height:16px;font-size:12px;color:#d2d2d2;letter-spacing:-0.099px;white-space:nowrap;">SM_DECAL_Ground</div>
<div style="left:1472px;top:99px;width:17px;height:15px;background:#383838;border-radius:0 2px 2px 0;"></div>
<svg style="left:1475px;top:101.0px;" width="11" height="11" viewBox="0 0 11 11" ><circle cx="5.5" cy="5.5" r="4.4" stroke="#d2d2d2" stroke-width="1.1" fill="none"/><circle cx="5.5" cy="5.5" r="1.6" fill="#d2d2d2"/></svg>
<div style="left:979px;top:124px;width:515px;height:1px;background:#1a1a1a;"></div>
<div style="left:979px;top:125px;width:515px;height:20px;background:#3e3e3e;"></div>
<div style="left:979px;top:145px;width:515px;height:1px;background:#303030;"></div>
<svg style="left:985px;top:132.0px;" width="10" height="8" viewBox="0 0 10 8" ><path d="M0.3 0.3H9.3L4.8 7.6Z" fill="#7c7c7c"/></svg>
<svg style="left:999.5px;top:128px;" width="15" height="15" viewBox="0 0 15 15" ><path d="M1 9V1.6Q1 1 1.6 1H12.4Q13 1 13 1.6V6" stroke="#74c8f0" stroke-width="1.2" fill="none"/><path d="M5 1V9M9 1V6M1 5H13" stroke="#74c8f0" stroke-width="1.1"/><path d="M1 9H5" stroke="#74c8f0" stroke-width="1.1"/><path d="M4.5 11Q9.5 5.5 14.5 11Q9.5 16 4.5 11Z" fill="#d8d8d8"/><circle cx="9.5" cy="11" r="1.7" fill="#3e3e3e"/></svg>
<div style="left:1018.8px;top:127.2px;width:14px;height:14px;background:#2a2a2a;border-radius:3px;border:1px solid #212121;border-top-color:#0d0d0d;"></div>
<svg style="left:1020.8px;top:129.7px;" width="10" height="9" viewBox="0 0 10 9" ><path d="M1.2 4.6L3.8 7.2L8.8 1.4" stroke="#e8e8e8" stroke-width="1.5" fill="none"/></svg>
<div class="t" style="left:1039.4px;top:128.1px;line-height:16px;font-size:12px;color:#d6d6d6;letter-spacing:0.108px;white-space:nowrap;font-weight:700;">Mesh Renderer</div>
<svg style="left:1436px;top:129.5px;" width="11" height="11" viewBox="0 0 11 11" ><circle cx="5.5" cy="5.5" r="5.4" fill="#d2d2d2"/><path d="M3.7 4.3A1.9 1.9 0 1 1 5.6 6.2V7" stroke="#3e3e3e" stroke-width="1.3" fill="none"/><circle cx="5.6" cy="8.6" r="0.8" fill="#3e3e3e"/></svg>
<svg style="left:1455.7px;top:129px;" width="12" height="12" viewBox="0 0 12 12" ><path d="M0.5 3.5H11.5M0.5 8.5H11.5" stroke="#d2d2d2" stroke-width="1.2"/><path d="M7.5 1V6M4.3 6V11" stroke="#d2d2d2" stroke-width="1.6"/><path d="M7.5 3.5H11.5M0.5 8.5H4.3" stroke="#383838" stroke-width="0"/></svg>
<svg style="left:1479px;top:128.5px;" width="6" height="14" viewBox="0 0 6 14" ><rect x="2" y="1" width="2" height="2" fill="#d2d2d2"/><rect x="2" y="5.5" width="2" height="2" fill="#d2d2d2"/><rect x="2" y="10" width="2" height="2" fill="#d2d2d2"/></svg>
<div style="left:979px;top:150px;width:2px;height:18px;background:#0f81be;"></div>
<div style="left:979px;top:175px;width:2px;height:18px;background:#0f81be;"></div>
<svg style="left:985px;top:156.0px;" width="10" height="8" viewBox="0 0 10 8" ><path d="M0.3 0.3H9.3L4.8 7.6Z" fill="#7c7c7c"/></svg>
<div class="t" style="left:999.3px;top:152.1px;line-height:16px;font-size:12px;color:#d0d0d0;letter-spacing:0.246px;white-space:nowrap;font-weight:700;">Materials</div>
<div style="left:1443px;top:150px;width:47.5px;height:18px;background:#2a2a2a;border-radius:3px;border:1px solid #212121;border-top-color:#0d0d0d;"></div>
<div class="t" style="left:1446px;top:152.1px;line-height:16px;font-size:12px;color:#d2d2d2;letter-spacing:0.25px;white-space:nowrap;">1</div>
<div style="left:997.5px;top:171.5px;width:493px;height:26px;background:#414141;border-radius:3px;border:1px solid #242424;"></div>
<div style="left:1003px;top:182px;width:10px;height:1px;background:#5e5e5e;"></div>
<div style="left:1003px;top:185px;width:10px;height:1px;background:#5e5e5e;"></div>
<div class="t" style="left:1027px;top:177.1px;line-height:16px;font-size:12px;color:#d0d0d0;letter-spacing:0.087px;white-space:nowrap;font-weight:700;">Element 0</div>
<div style="left:1199px;top:175.5px;width:285px;height:17px;background:#2a2a2a;border-radius:3px;border:1px solid #212121;border-top-color:#0d0d0d;"></div>
<svg style="left:1202.5px;top:178.5px;" width="11" height="11" viewBox="0 0 11 11" ><circle cx="5.5" cy="5.5" r="4.8" fill="#2a4a60" stroke="#6fb8e0" stroke-width="1"/><circle cx="4.4" cy="4.4" r="2.6" fill="#7fc8f0"/></svg>
<div class="t" style="left:1215.5px;top:177.1px;line-height:16px;font-size:12px;color:#d8d8d8;letter-spacing:-0.005px;white-space:nowrap;font-weight:700;">Ml_grass 1</div>
<div style="left:1466px;top:176.5px;width:17px;height:15px;background:#383838;border-radius:0 2px 2px 0;"></div>
<svg style="left:1469px;top:178.5px;" width="11" height="11" viewBox="0 0 11 11" ><circle cx="5.5" cy="5.5" r="4.4" stroke="#d2d2d2" stroke-width="1.1" fill="none"/><circle cx="5.5" cy="5.5" r="1.6" fill="#d2d2d2"/></svg>
<div style="left:1423.5px;top:196.5px;width:57px;height:19.5px;background:#414141;border-radius:0 0 3px 3px;border:1px solid #242424;border-top:none;"></div>
<svg style="left:1434px;top:201px;" width="11" height="11" viewBox="0 0 11 11" ><path d="M5.5 0.5V10.5M0.5 5.5H10.5" stroke="#d8d8d8" stroke-width="1.5"/></svg>
<svg style="left:1459px;top:201px;" width="10" height="11" viewBox="0 0 10 11" ><path d="M1 5.5H9" stroke="#d8d8d8" stroke-width="1.5"/></svg>
<svg style="left:985px;top:226.0px;" width="10" height="8" viewBox="0 0 10 8" ><path d="M0.3 0.3H9.3L4.8 7.6Z" fill="#7c7c7c"/></svg>
<div class="t" style="left:998.8px;top:222.1px;line-height:16px;font-size:12px;color:#d0d0d0;letter-spacing:-0.047px;white-space:nowrap;font-weight:700;">Lighting</div>
<div class="t" style="left:1012.8px;top:242.1px;line-height:16px;font-size:12px;color:#c4c4c4;letter-spacing:0.33px;white-space:nowrap;">Cast Shadows</div>
<div style="left:1191.5px;top:241px;width:298.5px;height:16.5px;background:#515151;border-radius:3px;border:1px solid #303030;"></div>
<div class="t" style="left:1195.2px;top:240.95px;line-height:16px;font-size:12px;color:#e4e4e4;letter-spacing:0.25px;white-space:nowrap;">Two Sided</div>
<svg style="left:1476.5px;top:247.5px;" width="8" height="4.5" viewBox="0 0 8 4.5" ><path d="M0 0H8L4.0 4.5Z" fill="#d2d2d2"/></svg>
<div class="t" style="left:1012.8px;top:262.1px;line-height:16px;font-size:12px;color:#c4c4c4;letter-spacing:0.348px;white-space:nowrap;">Static Shadow Caster</div>
<div style="left:1190.8px;top:261.7px;width:14px;height:14px;background:#2a2a2a;border-radius:3px;border:1px solid #212121;border-top-color:#0d0d0d;"></div>
<svg style="left:1192.8px;top:264.2px;" width="10" height="9" viewBox="0 0 10 9" ><path d="M1.2 4.6L3.8 7.2L8.8 1.4" stroke="#e8e8e8" stroke-width="1.5" fill="none"/></svg>
<div class="t" style="left:1012.8px;top:282.1px;line-height:16px;font-size:12px;color:#c4c4c4;letter-spacing:0.261px;white-space:nowrap;">Contribute Global Illumination</div>
<div style="left:1190.8px;top:281.7px;width:14px;height:14px;background:#2a2a2a;border-radius:3px;border:1px solid #212121;border-top-color:#0d0d0d;"></div>
<svg style="left:1192.8px;top:284.2px;" width="10" height="9" viewBox="0 0 10 9" ><path d="M1.2 4.6L3.8 7.2L8.8 1.4" stroke="#e8e8e8" stroke-width="1.5" fill="none"/></svg>
<div class="t" style="left:1012.8px;top:302.1px;line-height:16px;font-size:12px;color:#c4c4c4;letter-spacing:0.254px;white-space:nowrap;">Receive Global Illumination</div>
<div style="left:1191.5px;top:301px;width:298.5px;height:16.5px;background:#515151;border-radius:3px;border:1px solid #303030;"></div>
<div class="t" style="left:1195.2px;top:300.95000000000005px;line-height:16px;font-size:12px;color:#e4e4e4;letter-spacing:0.25px;white-space:nowrap;">Lightmaps</div>
<svg style="left:1476.5px;top:307.5px;" width="8" height="4.5" viewBox="0 0 8 4.5" ><path d="M0 0H8L4.0 4.5Z" fill="#d2d2d2"/></svg>
<svg style="left:985px;top:326.0px;" width="10" height="8" viewBox="0 0 10 8" ><path d="M0.3 0.3H9.3L4.8 7.6Z" fill="#7c7c7c"/></svg>
<div class="t" style="left:998.8px;top:322.1px;line-height:16px;font-size:12px;color:#d0d0d0;letter-spacing:0.197px;white-space:nowrap;font-weight:700;">Lightmapping</div>
<div class="t" style="left:1012.8px;top:342.1px;line-height:16px;font-size:12px;color:#c4c4c4;letter-spacing:0.246px;white-space:nowrap;">Scale In Lightmap</div>
<div style="left:1191.5px;top:340.5px;width:298.5px;height:17px;background:#2a2a2a;border-radius:3px;border:1px solid #212121;border-top-color:#0d0d0d;"></div>
<div class="t" style="left:1194.5px;top:342.1px;line-height:16px;font-size:12px;color:#d2d2d2;letter-spacing:0.25px;white-space:nowrap;">1</div>
<div style="left:1012.5px;top:361px;width:477.5px;height:36px;background:#404040;border-radius:3px;border:1px solid #242424;"></div>
<svg style="left:1017px;top:364px;" width="28" height="30" viewBox="0 0 28 30" ><path d="M13.5 0.8A12.6 12.6 0 0 1 24.6 19.4L26 28.6L18 25.2A12.6 12.6 0 1 1 13.5 0.8Z" fill="#f2f2f2"/><rect x="11.6" y="5" width="3.8" height="12" rx="1.9" fill="#2a2a2a"/><circle cx="13.5" cy="20.6" r="2" fill="#2a2a2a"/></svg>
<div class="t" style="left:1049.3px;top:372.1px;line-height:16px;font-size:10px;color:#bdbdbd;letter-spacing:0.323px;white-space:nowrap;">Object&#x27;s size in lightmap has reached the max atlas size.</div>
<div class="t" style="left:1012.8px;top:402.1px;line-height:16px;font-size:12px;color:#c4c4c4;letter-spacing:0.3px;white-space:nowrap;">Stitch Seams</div>
<div style="left:1190.8px;top:401.7px;width:14px;height:14px;background:#2a2a2a;border-radius:3px;border:1px solid #212121;border-top-color:#0d0d0d;"></div>
<svg style="left:1192.8px;top:404.2px;" width="10" height="9" viewBox="0 0 10 9" ><path d="M1.2 4.6L3.8 7.2L8.8 1.4" stroke="#e8e8e8" stroke-width="1.5" fill="none"/></svg>
<div class="t" style="left:1012.8px;top:422.1px;line-height:16px;font-size:12px;color:#c4c4c4;letter-spacing:0.237px;white-space:nowrap;">Lightmap Parameters</div>
<div style="left:1191.5px;top:421px;width:253px;height:16.5px;background:#515151;border-radius:3px;border:1px solid #303030;"></div>
<div class="t" style="left:1195.2px;top:420.95000000000005px;line-height:16px;font-size:12px;color:#e4e4e4;letter-spacing:0.272px;white-space:nowrap;">Scene Default Parameters</div>
<svg style="left:1431.0px;top:427.5px;" width="8" height="4.5" viewBox="0 0 8 4.5" ><path d="M0 0H8L4.0 4.5Z" fill="#d2d2d2"/></svg>
<div style="left:1449.5px;top:421px;width:40.5px;height:16.5px;background:#585858;border-radius:3px;border:1px solid #303030;"></div>
<div class="t" style="left:1449.5px;top:420.95000000000005px;line-height:16px;font-size:12px;color:#e4e4e4;letter-spacing:0.25px;white-space:nowrap;width:40.5px;text-align:center;">View</div>
<svg style="left:985px;top:446.0px;" width="10" height="8" viewBox="0 0 10 8" ><path d="M0.3 0.3H9.3L4.8 7.6Z" fill="#7c7c7c"/></svg>
<div class="t" style="left:998.8px;top:442.1px;line-height:16px;font-size:12px;color:#d0d0d0;letter-spacing:0.263px;white-space:nowrap;font-weight:700;">Probes</div>
<div class="t" style="left:1012.8px;top:462.1px;line-height:16px;font-size:12px;color:#c4c4c4;letter-spacing:0.237px;white-space:nowrap;">Light Probes</div>
<div style="left:1191.5px;top:461px;width:298.5px;height:16.5px;background:#515151;border-radius:3px;border:1px solid #303030;"></div>
<div class="t" style="left:1195.2px;top:460.95000000000005px;line-height:16px;font-size:12px;color:#e4e4e4;letter-spacing:0.25px;white-space:nowrap;">Blend Probes</div>
<svg style="left:1476.5px;top:467.5px;" width="8" height="4.5" viewBox="0 0 8 4.5" ><path d="M0 0H8L4.0 4.5Z" fill="#d2d2d2"/></svg>
<div class="t" style="left:1012.8px;top:482.1px;line-height:16px;font-size:12px;color:#c4c4c4;letter-spacing:0.259px;white-space:nowrap;">Anchor Override</div>
<div style="left:1191.5px;top:480.5px;width:298.5px;height:17px;background:#2a2a2a;border-radius:3px;border:1px solid #212121;border-top-color:#0d0d0d;"></div>
<div class="t" style="left:1194.5px;top:482.1px;line-height:16px;font-size:12px;color:#d2d2d2;letter-spacing:0.25px;white-space:nowrap;">None (Transform)</div>
<div style="left:1472px;top:481.5px;width:17px;height:15px;background:#383838;border-radius:0 2px 2px 0;"></div>
<svg style="left:1475px;top:483.5px;" width="11" height="11" viewBox="0 0 11 11" ><circle cx="5.5" cy="5.5" r="4.4" stroke="#d2d2d2" stroke-width="1.1" fill="none"/><circle cx="5.5" cy="5.5" r="1.6" fill="#d2d2d2"/></svg>
<svg style="left:985px;top:506.0px;" width="10" height="8" viewBox="0 0 10 8" ><path d="M0.3 0.3H9.3L4.8 7.6Z" fill="#7c7c7c"/></svg>
<div class="t" style="left:998.8px;top:502.1px;line-height:16px;font-size:12px;color:#d0d0d0;letter-spacing:0.203px;white-space:nowrap;font-weight:700;">Additional Settings</div>
<div class="t" style="left:1012.8px;top:522.1px;line-height:16px;font-size:12px;color:#c4c4c4;letter-spacing:0.433px;white-space:nowrap;">Motion Vectors</div>
<div style="left:1191.5px;top:521px;width:298.5px;height:16.5px;background:#515151;border-radius:3px;border:1px solid #303030;"></div>
<div class="t" style="left:1195.2px;top:520.95px;line-height:16px;font-size:12px;color:#e4e4e4;letter-spacing:0.25px;white-space:nowrap;">Per Object Motion</div>
<svg style="left:1476.5px;top:527.5px;" width="8" height="4.5" viewBox="0 0 8 4.5" ><path d="M0 0H8L4.0 4.5Z" fill="#d2d2d2"/></svg>
<div class="t" style="left:1012.8px;top:542.1px;line-height:16px;font-size:12px;color:#c4c4c4;letter-spacing:0.394px;white-space:nowrap;">Dynamic Occlusion</div>
<div style="left:1190.8px;top:541.7px;width:14px;height:14px;background:#2a2a2a;border-radius:3px;border:1px solid #212121;border-top-color:#0d0d0d;"></div>
<svg style="left:1192.8px;top:544.2px;" width="10" height="9" viewBox="0 0 10 9" ><path d="M1.2 4.6L3.8 7.2L8.8 1.4" stroke="#e8e8e8" stroke-width="1.5" fill="none"/></svg>
<div class="t" style="left:1012.8px;top:562.1px;line-height:16px;font-size:12px;color:#c4c4c4;letter-spacing:0.225px;white-space:nowrap;">Rendering Layer Mask</div>
<div style="left:1191.5px;top:561px;width:298.5px;height:16.5px;background:#515151;border-radius:3px;border:1px solid #303030;"></div>
<div class="t" style="left:1195.2px;top:560.95px;line-height:16px;font-size:12px;color:#e4e4e4;letter-spacing:0.25px;white-space:nowrap;">Light Layer default</div>
<svg style="left:1476.5px;top:567.5px;" width="8" height="4.5" viewBox="0 0 8 4.5" ><path d="M0 0H8L4.0 4.5Z" fill="#d2d2d2"/></svg>
<div style="left:979px;top:586px;width:515px;height:1px;background:#1a1a1a;"></div>
<div style="left:979px;top:587px;width:515px;height:54px;background:#3c3c3c;"></div>
<div style="left:979px;top:641px;width:515px;height:1px;background:#1a1a1a;"></div>
<div style="left:995px;top:593px;width:32px;height:32px;background:#515151;"></div>
<svg style="left:995px;top:593px" width="32" height="32" viewBox="0 0 32 32"><defs><radialGradient id="sph" cx="0.42" cy="0.38" r="0.62"><stop offset="0" stop-color="#6e6a38"/><stop offset="0.55" stop-color="#4a4824"/><stop offset="0.9" stop-color="#1c1c0e"/><stop offset="1" stop-color="#0a0a05"/></radialGradient></defs><circle cx="16" cy="16.2" r="14.6" fill="url(#sph)"/><path d="M15 3Q17 16 15.5 29" stroke="#5a3a20" stroke-width="1.6" fill="none" opacity="0.7"/><path d="M8 14Q10 18 8 21" stroke="#5a3a20" stroke-width="1.4" fill="none" opacity="0.5"/></svg>
<svg style="left:985px;top:627.0px;" width="10" height="8" viewBox="0 0 10 8" ><path d="M0.3 0.3H9.3L4.8 7.6Z" fill="#7c7c7c"/></svg>
<div class="t" style="left:1035.3px;top:593.1px;line-height:16px;font-size:13px;color:#c4c4c4;letter-spacing:0.245px;white-space:nowrap;">Ml_grass 1 (Material)</div>
<svg style="left:1449px;top:595.0px;" width="11" height="11" viewBox="0 0 11 11" ><circle cx="5.5" cy="5.5" r="5.4" fill="#d2d2d2"/><path d="M3.7 4.3A1.9 1.9 0 1 1 5.6 6.2V7" stroke="#3e3e3e" stroke-width="1.3" fill="none"/><circle cx="5.6" cy="8.6" r="0.8" fill="#3e3e3e"/></svg>
<svg style="left:1465.3px;top:594.5px;" width="12" height="12" viewBox="0 0 12 12" ><path d="M0.5 3.5H11.5M0.5 8.5H11.5" stroke="#d2d2d2" stroke-width="1.2"/><path d="M7.5 1V6M4.3 6V11" stroke="#d2d2d2" stroke-width="1.6"/><path d="M7.5 3.5H11.5M0.5 8.5H4.3" stroke="#383838" stroke-width="0"/></svg>
<svg style="left:1483.8px;top:594.0px;" width="6" height="14" viewBox="0 0 6 14" ><rect x="2" y="1" width="2" height="2" fill="#d2d2d2"/><rect x="2" y="5.5" width="2" height="2" fill="#d2d2d2"/><rect x="2" y="10" width="2" height="2" fill="#d2d2d2"/></svg>
<div class="t" style="left:1032.6px;top:617.1px;line-height:16px;font-size:12px;color:#c4c4c4;letter-spacing:0.159px;white-space:nowrap;">Shader</div>
<div style="left:1084px;top:616px;width:312px;height:16.5px;background:#515151;border-radius:3px;border:1px solid #303030;"></div>
<div class="t" style="left:1087.7px;top:615.95px;line-height:16px;font-size:12px;color:#e4e4e4;letter-spacing:0.299px;white-space:nowrap;">JMAShader/URP/FloorLit</div>
<svg style="left:1382.5px;top:622.5px;" width="8" height="4.5" viewBox="0 0 8 4.5" ><path d="M0 0H8L4.0 4.5Z" fill="#d2d2d2"/></svg>
<div style="left:1401px;top:616px;width:42px;height:16.5px;background:#585858;border-radius:3px;border:1px solid #303030;"></div>
<div class="t" style="left:1401px;top:615.95px;line-height:16px;font-size:12px;color:#e4e4e4;letter-spacing:0.25px;white-space:nowrap;width:42px;text-align:center;">Edit...</div>
<div style="left:1447.7px;top:616px;width:42.7px;height:16.5px;background:#515151;border-radius:3px;border:1px solid #303030;"></div>
<svg style="left:1456px;top:619px;" width="12" height="10" viewBox="0 0 12 10" ><path d="M3.5 1.5H11.5M3.5 5H11.5M3.5 8.5H11.5" stroke="#d2d2d2" stroke-width="1.1"/><rect x="0.4" y="0.9" width="1.4" height="1.4" fill="#d2d2d2"/><rect x="0.4" y="4.3" width="1.4" height="1.4" fill="#d2d2d2"/><rect x="0.4" y="7.8" width="1.4" height="1.4" fill="#d2d2d2"/></svg>
<svg style="left:1477px;top:622.25px;" width="8" height="4.5" viewBox="0 0 8 4.5" ><path d="M0 0H8L4.0 4.5Z" fill="#d2d2d2"/></svg>
<div class="t" style="left:1013.3px;top:651.1px;line-height:16px;font-size:12px;color:#c4c4c4;letter-spacing:0.25px;white-space:nowrap;">Color</div>
<div style="left:1426px;top:649px;width:64.5px;height:17.5px;background:#2a2a2a;border-radius:3px;border:1px solid #212121;"></div>
<div style="left:1427px;top:650px;width:45px;height:15.5px;background:#e8e8e8;border-radius:2px 0 0 2px;"></div>
<div style="left:1427px;top:662.7px;width:45px;height:2.8px;background:#ffffff;"></div>
<svg style="left:1475px;top:651.5px;" width="13" height="13" viewBox="0 0 13 13" ><path d="M1 12L1.6 9.6L7.2 4L9 5.8L3.4 11.4Z" fill="#d2d2d2"/><path d="M6.6 3L10 6.4" stroke="#d2d2d2" stroke-width="1.6"/><path d="M8.4 4.6L10.6 2.4" stroke="#d2d2d2" stroke-width="2.6" stroke-linecap="round"/></svg>
<div class="t" style="left:1013.3px;top:671.1px;line-height:16px;font-size:12px;color:#c4c4c4;letter-spacing:0.456px;white-space:nowrap;">Main Texture</div>
<div class="t" style="left:1028.3px;top:699.1px;line-height:16px;font-size:12px;color:#c4c4c4;letter-spacing:0.25px;white-space:nowrap;">Tiling</div>
<div class="t" style="left:1093px;top:699.1px;line-height:16px;font-size:12px;color:#c4c4c4;letter-spacing:0.25px;white-space:nowrap;">X</div>
<div class="t" style="left:1261.6px;top:699.1px;line-height:16px;font-size:12px;color:#c4c4c4;letter-spacing:0.25px;white-space:nowrap;">Y</div>
<div class="t" style="left:1028.3px;top:719.1px;line-height:16px;font-size:12px;color:#c4c4c4;letter-spacing:0.25px;white-space:nowrap;">Offset</div>
<div class="t" style="left:1093px;top:719.1px;line-height:16px;font-size:12px;color:#c4c4c4;letter-spacing:0.25px;white-space:nowrap;">X</div>
<div class="t" style="left:1261.6px;top:719.1px;line-height:16px;font-size:12px;color:#c4c4c4;letter-spacing:0.25px;white-space:nowrap;">Y</div>
<div style="left:1107.5px;top:697.5px;width:148px;height:17px;background:#2a2a2a;border-radius:3px;border:1px solid #212121;border-top-color:#0d0d0d;"></div>
<div class="t" style="left:1110.5px;top:699.1px;line-height:16px;font-size:12px;color:#d2d2d2;letter-spacing:0.25px;white-space:nowrap;">5</div>
<div style="left:1275.3px;top:697.5px;width:148.2px;height:17px;background:#2a2a2a;border-radius:3px;border:1px solid #212121;border-top-color:#0d0d0d;"></div>
<div class="t" style="left:1278.3px;top:699.1px;line-height:16px;font-size:12px;color:#d2d2d2;letter-spacing:0.25px;white-space:nowrap;">10</div>
<div style="left:1107.5px;top:717.5px;width:148px;height:17px;background:#2a2a2a;border-radius:3px;border:1px solid #212121;border-top-color:#0d0d0d;"></div>
<div class="t" style="left:1110.5px;top:719.1px;line-height:16px;font-size:12px;color:#d2d2d2;letter-spacing:0.25px;white-space:nowrap;">0</div>
<div style="left:1275.3px;top:717.5px;width:148.2px;height:17px;background:#2a2a2a;border-radius:3px;border:1px solid #212121;border-top-color:#0d0d0d;"></div>
<div class="t" style="left:1278.3px;top:719.1px;line-height:16px;font-size:12px;color:#d2d2d2;letter-spacing:0.25px;white-space:nowrap;">0</div>
<div class="t" style="left:1013.3px;top:743.1px;line-height:16px;font-size:12px;color:#c4c4c4;letter-spacing:0.395px;white-space:nowrap;">Dust Texture</div>
<div class="t" style="left:1028.3px;top:771.1px;line-height:16px;font-size:12px;color:#c4c4c4;letter-spacing:0.25px;white-space:nowrap;">Tiling</div>
<div class="t" style="left:1093px;top:771.1px;line-height:16px;font-size:12px;color:#c4c4c4;letter-spacing:0.25px;white-space:nowrap;">X</div>
<div class="t" style="left:1261.6px;top:771.1px;line-height:16px;font-size:12px;color:#c4c4c4;letter-spacing:0.25px;white-space:nowrap;">Y</div>
<div class="t" style="left:1028.3px;top:791.1px;line-height:16px;font-size:12px;color:#c4c4c4;letter-spacing:0.25px;white-space:nowrap;">Offset</div>
<div class="t" style="left:1093px;top:791.1px;line-height:16px;font-size:12px;color:#c4c4c4;letter-spacing:0.25px;white-space:nowrap;">X</div>
<div class="t" style="left:1261.6px;top:791.1px;line-height:16px;font-size:12px;color:#c4c4c4;letter-spacing:0.25px;white-space:nowrap;">Y</div>
<div style="left:1107.5px;top:769.5px;width:148px;height:17px;background:#2a2a2a;border-radius:3px;border:1px solid #212121;border-top-color:#0d0d0d;"></div>
<div class="t" style="left:1110.5px;top:771.1px;line-height:16px;font-size:12px;color:#d2d2d2;letter-spacing:0.25px;white-space:nowrap;">1</div>
<div style="left:1275.3px;top:769.5px;width:148.2px;height:17px;background:#2a2a2a;border-radius:3px;border:1px solid #212121;border-top-color:#0d0d0d;"></div>
<div class="t" style="left:1278.3px;top:771.1px;line-height:16px;font-size:12px;color:#d2d2d2;letter-spacing:0.25px;white-space:nowrap;">1</div>
<div style="left:1107.5px;top:789.5px;width:148px;height:17px;background:#2a2a2a;border-radius:3px;border:1px solid #212121;border-top-color:#0d0d0d;"></div>
<div class="t" style="left:1110.5px;top:791.1px;line-height:16px;font-size:12px;color:#d2d2d2;letter-spacing:0.25px;white-space:nowrap;">0</div>
<div style="left:1275.3px;top:789.5px;width:148.2px;height:17px;background:#2a2a2a;border-radius:3px;border:1px solid #212121;border-top-color:#0d0d0d;"></div>
<div class="t" style="left:1278.3px;top:791.1px;line-height:16px;font-size:12px;color:#d2d2d2;letter-spacing:0.25px;white-space:nowrap;">0</div>
<div style="left:1427px;top:669px;width:63.5px;height:64px;background:#2a2a2a;border:1px solid #1e1e1e;"></div>
<svg style="left:1430px;top:672px" width="58" height="58" viewBox="0 0 58 58"><defs><filter id="gn" x="0" y="0" width="1" height="1"><feTurbulence type="fractalNoise" baseFrequency="0.22 0.26" numOctaves="4" seed="7"/><feColorMatrix type="matrix" values="0 0 0 0 0.5  0 0 0 0 0.5  0 0 0 0 0.3  1.3 1.3 0 0 -0.95"/></filter></defs><rect width="58" height="58" fill="#737138"/><rect width="58" height="58" fill="#a8a05c" filter="url(#gn)" opacity="0.5"/></svg>
<div style="left:1427px;top:741px;width:63.5px;height:64px;background:#2a2a2a;border:1px solid #1e1e1e;"></div>
<svg style="left:1430px;top:744px" width="58" height="58" viewBox="0 0 58 58"><rect width="58" height="58" fill="#5a5653"/><g fill="#6e6a66"><rect x="0" y="0" width="14.5" height="14.5"/><rect x="29" y="0" width="14.5" height="14.5"/><rect x="14.5" y="14.5" width="14.5" height="14.5"/><rect x="43.5" y="14.5" width="14.5" height="14.5"/><rect x="0" y="29" width="14.5" height="14.5"/><rect x="29" y="29" width="14.5" height="14.5"/><rect x="14.5" y="43.5" width="14.5" height="14.5"/><rect x="43.5" y="43.5" width="14.5" height="14.5"/></g><g stroke="#84512e" fill="none" stroke-linecap="round" opacity="0.88"><path d="M24 3Q22 10 29 14Q36 19 30 26Q24 32 24 42L23 56" stroke-width="3.4"/><path d="M7 13Q16 10 24 14" stroke-width="3.6"/><path d="M10 21Q18 18 27 22" stroke-width="5"/><path d="M8 29Q14 27 20 30" stroke-width="3.4"/><path d="M24 31Q34 26 44 30" stroke-width="4.4"/><path d="M9 40Q16 37 22 40" stroke-width="4.6"/><path d="M27 39Q38 36 46 39" stroke-width="3.6"/><path d="M9 49Q18 46 24 50" stroke-width="3.4"/><path d="M32 46Q38 44 44 47" stroke-width="3"/><path d="M49 16L51 22" stroke-width="3"/></g><rect width="58" height="58" fill="none" stroke="#8a5630" stroke-width="1.4" opacity="0.85"/></svg>
<div style="left:1454.5px;top:720.5px;width:35px;height:11.5px;background:#4a4a4a;border-radius:2px 0 0 0;border:1px solid #2a2a2a;"></div>
<div class="t" style="left:1454.5px;top:718.7px;line-height:16px;font-size:10px;color:#cfcfcf;letter-spacing:0.3px;white-space:nowrap;width:35px;text-align:center;">Select</div>
<div style="left:1454.5px;top:792.5px;width:35px;height:11.5px;background:#4a4a4a;border-radius:2px 0 0 0;border:1px solid #2a2a2a;"></div>
<div class="t" style="left:1454.5px;top:790.7px;line-height:16px;font-size:10px;color:#cfcfcf;letter-spacing:0.3px;white-space:nowrap;width:35px;text-align:center;">Select</div>
<div class="t" style="left:1013.3px;top:829.1px;line-height:16px;font-size:12px;color:#c4c4c4;letter-spacing:0.115px;white-space:nowrap;">Render Queue</div>
<div style="left:1326.5px;top:827.5px;width:97px;height:17px;background:#515151;border-radius:3px;border:1px solid #303030;"></div>
<div class="t" style="left:1330.2px;top:827.7px;line-height:16px;font-size:12px;color:#e4e4e4;letter-spacing:0.097px;white-space:nowrap;">From Shader</div>
<svg style="left:1410.0px;top:834.25px;" width="8" height="4.5" viewBox="0 0 8 4.5" ><path d="M0 0H8L4.0 4.5Z" fill="#d2d2d2"/></svg>
<div style="left:1427px;top:827.5px;width:63px;height:17px;background:#2a2a2a;border-radius:3px;border:1px solid #212121;border-top-color:#0d0d0d;"></div>
<div class="t" style="left:1430px;top:829.1px;line-height:16px;font-size:12px;color:#d2d2d2;letter-spacing:0.25px;white-space:nowrap;">2000</div>
<div class="t" style="left:1013.3px;top:851.1px;line-height:16px;font-size:12px;color:#c4c4c4;letter-spacing:0.163px;white-space:nowrap;">Enable GPU Instancing</div>
<div style="left:1425.8px;top:850.7px;width:14px;height:14px;background:#2a2a2a;border-radius:3px;border:1px solid #212121;border-top-color:#0d0d0d;"></div>
<svg style="left:1427.8px;top:853.2px;" width="10" height="9" viewBox="0 0 10 9" ><path d="M1.2 4.6L3.8 7.2L8.8 1.4" stroke="#e8e8e8" stroke-width="1.5" fill="none"/></svg>
<div class="t" style="left:1013.3px;top:873.1px;line-height:16px;font-size:12px;color:#c4c4c4;letter-spacing:0.222px;white-space:nowrap;">Double Sided Global Illumination</div>
<div style="left:1425.8px;top:872.7px;width:14px;height:14px;background:#2a2a2a;border-radius:3px;border:1px solid #212121;border-top-color:#0d0d0d;"></div>
<div style="left:979px;top:900px;width:515px;height:1px;background:#1a1a1a;"></div>
<div style="left:1123px;top:910px;width:228px;height:22.5px;background:#585858;border-radius:3px;border:1px solid #303030;"></div>
<div class="t" style="left:1123px;top:912.6px;line-height:16px;font-size:12px;color:#e4e4e4;letter-spacing:0.314px;white-space:nowrap;width:228px;text-align:center;">Add Component</div>
</div>
</body></html>
